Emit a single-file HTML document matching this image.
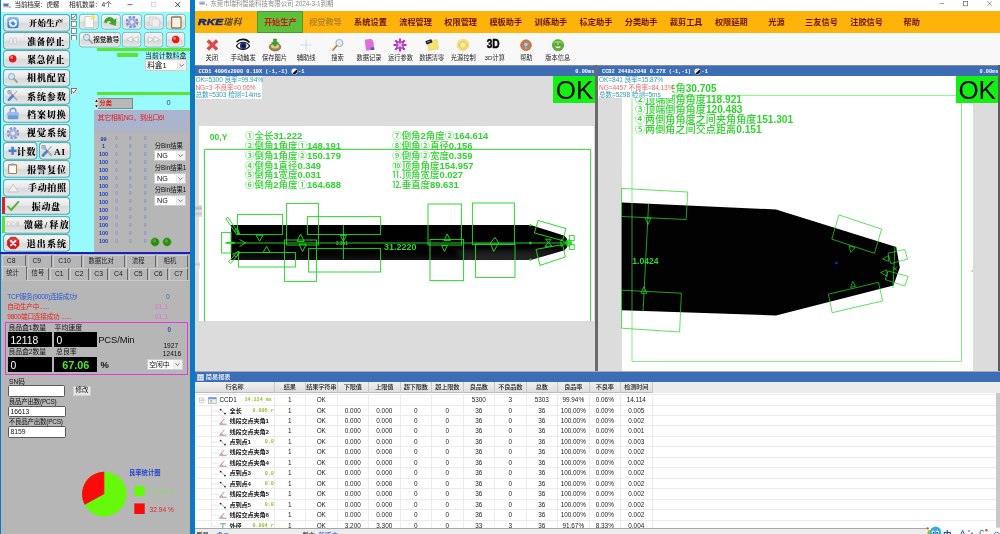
<!DOCTYPE html>
<html lang="zh"><head><meta charset="utf-8"><title>RKE</title>
<style>
html,body{margin:0;padding:0}
body{width:1000px;height:534px;position:relative;overflow:hidden;background:#0b78c2;font-family:"Liberation Sans","Noto Sans CJK SC",sans-serif;}
div,svg{position:absolute;box-sizing:border-box}
.t{white-space:nowrap;overflow:visible}
#root{left:0;top:0;width:1000px;height:534px;will-change:transform;overflow:hidden}
.sf{font-family:"Liberation Serif","Noto Serif CJK SC",serif;font-weight:900}
.btn{border:1px solid #9aa;border-radius:2px;background:linear-gradient(#f4f4f4,#e4e4e4 45%,#d6d6d6 55%,#e2e2e2);box-shadow:0 0 0 1px #5fb9bd}
.sbtn{border:1px solid #64b0b6;border-radius:2.5px;background:linear-gradient(#f6f6f6,#e8e8e8 45%,#dadada 55%,#e6e6e6);box-shadow:inset 0 0 0 0.5px #fff}
.sel{background:#fff;border:1px solid #ccc}
.inp{background:#fff;border:1.1px solid #5a5a5a;border-radius:1.6px}
</style></head><body><div id="root">

<div style="left:0px;top:0px;width:195px;height:534px;background:#0b78c2"></div>
<div style="left:1px;top:0px;width:189px;height:12px;background:#fff"></div>
<div style="left:1px;top:12px;width:189px;height:241px;background:#98fafa"></div>
<svg style="left:3px;top:2px" width="8" height="7" viewBox="0 0 8 7"><rect x="0.5" y="1" width="5" height="3.4" fill="#3a6fc0"/><rect x="0.5" y="1" width="5" height="1.2" fill="#9cc0f0"/><rect x="0" y="4.4" width="6" height="1" fill="#e0b060"/><circle cx="7" cy="5" r="0.7" fill="#555"/></svg>
<div class="t" style="left:14.5px;top:0.18px;height:9.24px;line-height:9.24px;font-size:6.6px;color:#222;letter-spacing:-0.2px">当前档案：虎螺</div>
<div class="t" style="left:69px;top:0.18px;height:9.24px;line-height:9.24px;font-size:6.6px;color:#222;letter-spacing:-0.1px">相机数量：4个</div>
<svg style="left:126px;top:0" width="60" height="10" viewBox="0 0 60 10"><path d="M1.5 4.6h5" stroke="#333" stroke-width="0.7"/><rect x="25.3" y="2.3" width="4.6" height="4.6" fill="none" stroke="#c4c4c4" stroke-width="0.6"/><path d="M49.3 2.2l4.8 4.8M54.1 2.2l-4.8 4.8" stroke="#222" stroke-width="0.9"/></svg>
<svg style="left:0;top:0" width="0" height="0"><defs><linearGradient id="bg1" x1="0" y1="0" x2="0" y2="1"><stop offset="0" stop-color="#f7f7f7"/><stop offset="0.45" stop-color="#e8e8e8"/><stop offset="0.55" stop-color="#d9d9d9"/><stop offset="1" stop-color="#e6e6e6"/></linearGradient></defs></svg>
<svg style="left:2.2px;top:12.6px" width="69.10" height="19.70" viewBox="2.2 12.6 69.10 19.70"><rect x="3.78" y="14.17" width="65.95" height="16.55" rx="3" fill="url(#bg1)" stroke="#5aaab2" stroke-width="1.15"/><rect x="4.65" y="15.05" width="64.20" height="14.80" rx="2.2" fill="none" stroke="#fff" stroke-width="0.5" opacity="0.8"/></svg>
<svg style="left:6.8px;top:16.50px" width="12.4" height="12.4" viewBox="0 0 12 12" overflow="visible"><rect x="0.4" y="0.6" width="10.8" height="10.4" rx="2.2" fill="#3f86d8"/><rect x="0.4" y="0.6" width="10.8" height="4.6" rx="2.2" fill="#86b8f0"/><path d="M2.6 6.6a3.2 3.2 0 0 1 6.2-1.4M9 5.4a3.2 3.2 0 0 1-6.2 1.4" stroke="#fff" stroke-width="1.5" fill="none"/><path d="M8 2.6l1.6 2.8-3 0.2zM3.6 9.6L2 6.8l3-0.2z" fill="#fff"/></svg>
<div class="t sf" style="left:16.174999999999997px;width:60px;text-align:center;top:17.67px;height:11.76px;line-height:11.76px;font-size:8.4px;color:#000;letter-spacing:0.35px">开始生产</div>
<svg style="left:2.2px;top:30.96px" width="69.10" height="19.70" viewBox="2.2 30.96 69.10 19.70"><rect x="3.78" y="32.54" width="65.95" height="16.55" rx="3" fill="url(#bg1)" stroke="#5aaab2" stroke-width="1.15"/><rect x="4.65" y="33.41" width="64.20" height="14.80" rx="2.2" fill="none" stroke="#fff" stroke-width="0.5" opacity="0.8"/></svg>
<svg style="left:6.8px;top:34.86px" width="12.4" height="12.4" viewBox="0 0 12 12" overflow="visible"><rect x="2.8" y="2.8" width="2.5" height="6" rx="1.1" fill="#f0f0f0" stroke="#bcbcbc" stroke-width="0.5"/><rect x="6.4" y="2.8" width="2.5" height="6" rx="1.1" fill="#f0f0f0" stroke="#bcbcbc" stroke-width="0.5"/></svg>
<div class="t sf" style="left:16.0px;width:60px;text-align:center;top:35.75px;height:12.32px;line-height:12.32px;font-size:8.8px;color:#000;letter-spacing:0.6px">准备停止</div>
<svg style="left:2.2px;top:49.32px" width="69.10" height="19.70" viewBox="2.2 49.32 69.10 19.70"><rect x="3.78" y="50.90" width="65.95" height="16.55" rx="3" fill="url(#bg1)" stroke="#5aaab2" stroke-width="1.15"/><rect x="4.65" y="51.77" width="64.20" height="14.80" rx="2.2" fill="none" stroke="#fff" stroke-width="0.5" opacity="0.8"/></svg>
<svg style="left:6.8px;top:53.22px" width="12.4" height="12.4" viewBox="0 0 12 12" overflow="visible"><circle cx="5.5" cy="5.5" r="3.6" fill="#e41818"/><circle cx="4.5" cy="4.3" r="1.3" fill="#ff8a8a"/></svg>
<div class="t sf" style="left:16.0px;width:60px;text-align:center;top:54.11px;height:12.32px;line-height:12.32px;font-size:8.8px;color:#000;letter-spacing:0.6px">紧急停止</div>
<svg style="left:2.2px;top:67.67999999999999px" width="69.10" height="19.70" viewBox="2.2 67.67999999999999 69.10 19.70"><rect x="3.78" y="69.25" width="65.95" height="16.55" rx="3" fill="url(#bg1)" stroke="#5aaab2" stroke-width="1.15"/><rect x="4.65" y="70.13" width="64.20" height="14.80" rx="2.2" fill="none" stroke="#fff" stroke-width="0.5" opacity="0.8"/></svg>
<svg style="left:6.8px;top:71.58px" width="12.4" height="12.4" viewBox="0 0 12 12" overflow="visible"><circle cx="4.4" cy="4.4" r="3" fill="#cfe4fb" stroke="#8aa" stroke-width="0.9"/><path d="M6.6 6.6l3.2 3.2" stroke="#999" stroke-width="1.6" stroke-linecap="round"/></svg>
<div class="t sf" style="left:16.85px;width:60px;text-align:center;top:72.33px;height:12.60px;line-height:12.60px;font-size:9px;color:#000;letter-spacing:0.9px">相机配置</div>
<svg style="left:2.2px;top:86.03999999999999px" width="69.10" height="19.70" viewBox="2.2 86.03999999999999 69.10 19.70"><rect x="3.78" y="87.61" width="65.95" height="16.55" rx="3" fill="url(#bg1)" stroke="#5aaab2" stroke-width="1.15"/><rect x="4.65" y="88.49" width="64.20" height="14.80" rx="2.2" fill="none" stroke="#fff" stroke-width="0.5" opacity="0.8"/></svg>
<svg style="left:6.8px;top:89.94px" width="12.4" height="12.4" viewBox="0 0 12 12" overflow="visible"><path d="M2.2 1.8l7.2 7.6" stroke="#a8acb4" stroke-width="1.7" stroke-linecap="round"/><circle cx="2.4" cy="2" r="1.7" fill="none" stroke="#a8acb4" stroke-width="1.1"/><path d="M9.4 1.4L5.6 5.6" stroke="#b0b4bc" stroke-width="1.1" stroke-linecap="round"/><path d="M5.4 5.8L1.8 9.6" stroke="#4a84d4" stroke-width="2.5" stroke-linecap="round"/></svg>
<div class="t sf" style="left:16.85px;width:60px;text-align:center;top:90.69px;height:12.60px;line-height:12.60px;font-size:9px;color:#000;letter-spacing:0.9px">系统参数</div>
<svg style="left:2.2px;top:104.39999999999999px" width="69.10" height="19.70" viewBox="2.2 104.39999999999999 69.10 19.70"><rect x="3.78" y="105.97" width="65.95" height="16.55" rx="3" fill="url(#bg1)" stroke="#5aaab2" stroke-width="1.15"/><rect x="4.65" y="106.85" width="64.20" height="14.80" rx="2.2" fill="none" stroke="#fff" stroke-width="0.5" opacity="0.8"/></svg>
<svg style="left:6.8px;top:108.30px" width="12.4" height="12.4" viewBox="0 0 12 12" overflow="visible"><rect x="0.6" y="4.4" width="10.4" height="6.6" rx="0.8" fill="#6a9ade"/><path d="M3 4.4V3a2.8 2.8 0 0 1 5.6 0v1.4" stroke="#6a94d4" stroke-width="1.3" fill="none"/><rect x="0.6" y="4.4" width="10.4" height="2.8" fill="#98bcee"/></svg>
<div class="t sf" style="left:16.85px;width:60px;text-align:center;top:109.05px;height:12.60px;line-height:12.60px;font-size:9px;color:#000;letter-spacing:0.9px">档案切换</div>
<svg style="left:2.2px;top:122.75999999999999px" width="69.10" height="19.70" viewBox="2.2 122.75999999999999 69.10 19.70"><rect x="3.78" y="124.33" width="65.95" height="16.55" rx="3" fill="url(#bg1)" stroke="#5aaab2" stroke-width="1.15"/><rect x="4.65" y="125.21" width="64.20" height="14.80" rx="2.2" fill="none" stroke="#fff" stroke-width="0.5" opacity="0.8"/></svg>
<svg style="left:6.8px;top:126.66px" width="12.4" height="12.4" viewBox="0 0 12 12" overflow="visible"><circle cx="5.8" cy="6" r="4.7" fill="none" stroke="#8a98d4" stroke-width="2.6" stroke-dasharray="2.3 1.39"/><circle cx="5.8" cy="6" r="3.9" fill="#a8b2e4"/><circle cx="5.8" cy="6" r="1.7" fill="#f0f2ff"/></svg>
<div class="t sf" style="left:17.049999999999997px;width:60px;text-align:center;top:127.41px;height:12.60px;line-height:12.60px;font-size:9px;color:#000;letter-spacing:1.1px">视觉系统</div>
<svg style="left:2.2px;top:141.11999999999998px" width="36.40" height="19.70" viewBox="2.2 141.11999999999998 36.40 19.70"><rect x="3.78" y="142.69" width="33.25" height="16.55" rx="3" fill="url(#bg1)" stroke="#5aaab2" stroke-width="1.15"/><rect x="4.65" y="143.57" width="31.50" height="14.80" rx="2.2" fill="none" stroke="#fff" stroke-width="0.5" opacity="0.8"/></svg>
<svg style="left:37.7px;top:141.11999999999998px" width="33.70" height="19.70" viewBox="37.7 141.11999999999998 33.70 19.70"><rect x="39.28" y="142.69" width="30.55" height="16.55" rx="3" fill="url(#bg1)" stroke="#5aaab2" stroke-width="1.15"/><rect x="40.15" y="143.57" width="28.80" height="14.80" rx="2.2" fill="none" stroke="#fff" stroke-width="0.5" opacity="0.8"/></svg>
<svg style="left:7.8px;top:145.72px" width="10" height="10" viewBox="0 0 10 10"><path d="M4.6 0.8v8M0.6 4.8h8" stroke="#4a80d4" stroke-width="2.6"/></svg>
<div class="t sf" style="left:16.8px;top:145.77px;height:12.60px;line-height:12.60px;font-size:9px;color:#000;letter-spacing:0.6px">计数</div>
<svg style="left:41.2px;top:145.12px" width="12" height="12" viewBox="0 0 11 11"><path d="M2.2 1.8l7.2 7.6" stroke="#a8acb4" stroke-width="1.7" stroke-linecap="round"/><circle cx="2.4" cy="2" r="1.7" fill="none" stroke="#a8acb4" stroke-width="1.1"/><path d="M9.4 1.4L5.6 5.6" stroke="#b0b4bc" stroke-width="1.1" stroke-linecap="round"/><path d="M5.4 5.8L1.8 9.6" stroke="#4a84d4" stroke-width="2.5" stroke-linecap="round"/></svg>
<div class="t sf" style="left:54px;top:145.77px;height:12.60px;line-height:12.60px;font-size:9px;color:#000;letter-spacing:1px">AI</div>
<svg style="left:2.2px;top:159.48px" width="69.10" height="19.70" viewBox="2.2 159.48 69.10 19.70"><rect x="3.78" y="161.05" width="65.95" height="16.55" rx="3" fill="url(#bg1)" stroke="#5aaab2" stroke-width="1.15"/><rect x="4.65" y="161.93" width="64.20" height="14.80" rx="2.2" fill="none" stroke="#fff" stroke-width="0.5" opacity="0.8"/></svg>
<svg style="left:6.8px;top:163.38px" width="12.4" height="12.4" viewBox="0 0 12 12" overflow="visible"><rect x="1.6" y="1.6" width="7.6" height="8.6" rx="0.8" fill="#fff" stroke="#b08040" stroke-width="1.1"/><rect x="3.6" y="0.6" width="3.6" height="1.8" fill="#999"/></svg>
<div class="t sf" style="left:17.075000000000003px;width:60px;text-align:center;top:164.13px;height:12.60px;line-height:12.60px;font-size:9px;color:#000;letter-spacing:0.95px">报警复位</div>
<svg style="left:2.2px;top:177.84px" width="69.10" height="19.70" viewBox="2.2 177.84 69.10 19.70"><rect x="3.78" y="179.41" width="65.95" height="16.55" rx="3" fill="url(#bg1)" stroke="#5aaab2" stroke-width="1.15"/><rect x="4.65" y="180.29" width="64.20" height="14.80" rx="2.2" fill="none" stroke="#fff" stroke-width="0.5" opacity="0.8"/></svg>
<svg style="left:6.8px;top:181.74px" width="12.4" height="12.4" viewBox="0 0 12 12" overflow="visible"><path d="M6 2L10.8 9.6H1.2z" fill="#f0f0f0" stroke="#b4b4b4" stroke-width="0.6"/></svg>
<div class="t sf" style="left:17.35px;width:60px;text-align:center;top:182.49px;height:12.60px;line-height:12.60px;font-size:9px;color:#000;letter-spacing:0.7px">手动拍照</div>
<svg style="left:2.2px;top:196.2px" width="69.10" height="19.70" viewBox="2.2 196.2 69.10 19.70"><rect x="3.78" y="197.77" width="65.95" height="16.55" rx="3" fill="url(#bg1)" stroke="#5aaab2" stroke-width="1.15"/><rect x="4.65" y="198.65" width="64.20" height="14.80" rx="2.2" fill="none" stroke="#fff" stroke-width="0.5" opacity="0.8"/></svg>
<div style="left:2.2px;top:197.39999999999998px;width:2.6px;height:17.099999999999998px;background:#e02020"></div>
<svg style="left:6.8px;top:200.10px" width="12.4" height="12.4" viewBox="0 0 12 12" overflow="visible"><path d="M1 6.4l3.2 3.2L11 1.8" stroke="#5ab444" stroke-width="2" fill="none" stroke-linecap="round"/></svg>
<div class="t sf" style="left:16.199999999999996px;width:60px;text-align:center;top:200.85px;height:12.60px;line-height:12.60px;font-size:9px;color:#000;letter-spacing:0.6px">振动盘</div>
<svg style="left:2.2px;top:214.55999999999997px" width="69.10" height="19.70" viewBox="2.2 214.55999999999997 69.10 19.70"><rect x="3.78" y="216.13" width="65.95" height="16.55" rx="3" fill="url(#bg1)" stroke="#5aaab2" stroke-width="1.15"/><rect x="4.65" y="217.01" width="64.20" height="14.80" rx="2.2" fill="none" stroke="#fff" stroke-width="0.5" opacity="0.8"/></svg>
<div style="left:2.2px;top:215.75999999999996px;width:2.6px;height:17.099999999999998px;background:#60e030"></div>
<svg style="left:6.8px;top:218.46px" width="12.4" height="12.4" viewBox="0 0 12 12" overflow="visible"><path d="M0.6 3.2v5l3.6-2.5zM4.8 3.2v5l3.6-2.5z" fill="#f2f2f2" stroke="#b8b8b8" stroke-width="0.5"/><path d="M9.6 3.2v5M11 3.2v5" stroke="#b8b8b8" stroke-width="0.6"/></svg>
<div class="t sf" style="left:16.849999999999994px;width:60px;text-align:center;top:219.21px;height:12.60px;line-height:12.60px;font-size:9px;color:#000;letter-spacing:1.1px">激磁<span style="margin:0 1.2px 0 0.6px">/</span>释放</div>
<svg style="left:2.2px;top:232.92px" width="69.10" height="19.70" viewBox="2.2 232.92 69.10 19.70"><rect x="3.78" y="234.49" width="65.95" height="16.55" rx="3" fill="url(#bg1)" stroke="#5aaab2" stroke-width="1.15"/><rect x="4.65" y="235.37" width="64.20" height="14.80" rx="2.2" fill="none" stroke="#fff" stroke-width="0.5" opacity="0.8"/></svg>
<svg style="left:6.8px;top:236.82px" width="12.4" height="12.4" viewBox="0 0 12 12" overflow="visible"><path d="M3.4 -0.4h4.8l3.2 3.2v4.8l-3.2 3.2H3.4l-3.2-3.2V2.8z" fill="#d41a1a" stroke="#a81010" stroke-width="0.5" transform="translate(0.2 0.6)"/><ellipse cx="6" cy="3.6" rx="4.4" ry="2.6" fill="#f07070" opacity="0.45"/><path d="M3.8 3.8l4.4 4.4M8.2 3.8l-4.4 4.4" stroke="#fff" stroke-width="1.7" stroke-linecap="round"/></svg>
<div class="t sf" style="left:16.949999999999996px;width:60px;text-align:center;top:237.57px;height:12.60px;line-height:12.60px;font-size:9px;color:#000;letter-spacing:1.1px">退出系统</div>
<svg style="left:71.2px;top:14.2px" width="5.6" height="5.6" viewBox="0 0 6 6"><rect x="0.35" y="0.35" width="5.3" height="5.3" fill="#fff" stroke="#555" stroke-width="0.7"/><path d="M1.3 3.1l1.2 1.3L4.8 1.5" stroke="#222" stroke-width="0.75" fill="none"/></svg>
<svg style="left:71.2px;top:21.1px" width="5.6" height="5.6" viewBox="0 0 6 6"><rect x="0.35" y="0.35" width="5.3" height="5.3" fill="#fff" stroke="#555" stroke-width="0.7"/></svg>
<svg style="left:71.2px;top:28.0px" width="5.6" height="5.6" viewBox="0 0 6 6"><rect x="0.35" y="0.35" width="5.3" height="5.3" fill="#fff" stroke="#555" stroke-width="0.7"/></svg>
<svg style="left:71.2px;top:34.900000000000006px" width="5.6" height="5.6" viewBox="0 0 6 6"><rect x="0.35" y="0.35" width="5.3" height="5.3" fill="#fff" stroke="#555" stroke-width="0.7"/></svg>
<svg style="left:70.6px;top:87.6px" width="6.6" height="6.6" viewBox="0 0 6 6"><rect x="0.35" y="0.35" width="5.3" height="5.3" fill="#fff" stroke="#555" stroke-width="0.7"/><path d="M1.3 3.1l1.2 1.3L4.8 1.5" stroke="#222" stroke-width="0.75" fill="none"/></svg>
<svg style="left:77.85px;top:13.4px" width="21.60" height="17.50" viewBox="77.85 13.4 21.60 17.50"><rect x="79.30" y="14.85" width="18.70" height="14.60" rx="2.6" fill="url(#bg1)" stroke="#62aeb6" stroke-width="0.9"/><rect x="80.05" y="15.60" width="17.20" height="13.10" rx="1.8" fill="none" stroke="#fff" stroke-width="0.5" opacity="0.8"/></svg>
<svg style="left:80.65px;top:14.2px" width="16" height="16" viewBox="0 0 16 16"><path d="M4 2.5h8.5v11H4z" fill="#fafafa" stroke="#bbb" stroke-width="0.6"/><path d="M9.5 2.5l3 3h-3z" fill="#ddd"/><circle cx="12.2" cy="3" r="2" fill="#f8e83a"/></svg>
<svg style="left:99.5px;top:13.4px" width="21.70" height="17.50" viewBox="99.5 13.4 21.70 17.50"><rect x="100.95" y="14.85" width="18.80" height="14.60" rx="2.6" fill="url(#bg1)" stroke="#62aeb6" stroke-width="0.9"/><rect x="101.70" y="15.60" width="17.30" height="13.10" rx="1.8" fill="none" stroke="#fff" stroke-width="0.5" opacity="0.8"/></svg>
<svg style="left:102.35px;top:14.2px" width="16" height="16" viewBox="0 0 16 16"><path d="M2.4 8.4c0.4-5.6 7.4-6.8 9.8-2.4l2-1.2-0.6 6.8-6.2-2 2.1-1.3c-1.6-2.6-4.6-1.8-4.9 0.6z" fill="#3aa828" stroke="#2a8a1c" stroke-width="0.4"/></svg>
<svg style="left:121.2px;top:13.4px" width="21.70" height="17.50" viewBox="121.2 13.4 21.70 17.50"><rect x="122.65" y="14.85" width="18.80" height="14.60" rx="2.6" fill="url(#bg1)" stroke="#62aeb6" stroke-width="0.9"/><rect x="123.40" y="15.60" width="17.30" height="13.10" rx="1.8" fill="none" stroke="#fff" stroke-width="0.5" opacity="0.8"/></svg>
<svg style="left:124.05px;top:14.2px" width="16" height="16" viewBox="0 0 16 16"><circle cx="8" cy="8" r="4.9" fill="none" stroke="#7f8fd0" stroke-width="2.8" stroke-dasharray="2.4 1.45"/><circle cx="8" cy="8" r="4" fill="#a4aee4"/><circle cx="8" cy="8" r="1.7" fill="#f4f4ff"/></svg>
<svg style="left:143.1px;top:13.4px" width="21.70" height="17.50" viewBox="143.1 13.4 21.70 17.50"><rect x="144.55" y="14.85" width="18.80" height="14.60" rx="2.6" fill="url(#bg1)" stroke="#62aeb6" stroke-width="0.9"/><rect x="145.30" y="15.60" width="17.30" height="13.10" rx="1.8" fill="none" stroke="#fff" stroke-width="0.5" opacity="0.8"/></svg>
<svg style="left:145.95px;top:14.2px" width="16" height="16" viewBox="0 0 16 16"><rect x="3.5" y="3" width="7.5" height="8" fill="#eee" stroke="#c4c4c4" stroke-width="0.6"/><rect x="6" y="5" width="7.5" height="8" fill="#eee" stroke="#c4c4c4" stroke-width="0.6"/></svg>
<svg style="left:164.7px;top:13.4px" width="21.80" height="17.50" viewBox="164.7 13.4 21.80 17.50"><rect x="166.15" y="14.85" width="18.90" height="14.60" rx="2.6" fill="url(#bg1)" stroke="#62aeb6" stroke-width="0.9"/><rect x="166.90" y="15.60" width="17.40" height="13.10" rx="1.8" fill="none" stroke="#fff" stroke-width="0.5" opacity="0.8"/></svg>
<svg style="left:167.60px;top:14.2px" width="16" height="16" viewBox="0 0 16 16"><rect x="3.6" y="3" width="9.4" height="11" rx="0.8" fill="#f6f2ea" stroke="#a87838" stroke-width="1.3"/><rect x="6" y="1.8" width="4.6" height="2.2" fill="#999"/></svg>
<svg style="left:77.5px;top:30.5px" width="43.70" height="17.40" viewBox="77.5 30.5 43.70 17.40"><rect x="78.95" y="31.95" width="40.80" height="14.50" rx="2.6" fill="url(#bg1)" stroke="#62aeb6" stroke-width="0.9"/><rect x="79.70" y="32.70" width="39.30" height="13.00" rx="1.8" fill="none" stroke="#fff" stroke-width="0.5" opacity="0.8"/></svg>
<svg style="left:81.6px;top:33.2px" width="12" height="12" viewBox="0 0 12 12"><circle cx="4.6" cy="4.4" r="3.1" fill="#d4e8fc" stroke="#8aa0b8" stroke-width="0.9"/><path d="M7 6.8l3.4 3.4" stroke="#999" stroke-width="1.6" stroke-linecap="round"/></svg>
<div class="t" style="left:93.2px;top:35.05px;height:9.10px;line-height:9.10px;font-size:6.5px;color:#000;font-weight:500">视觉教导</div>
<svg style="left:121.4px;top:30.5px" width="21.20" height="17.40" viewBox="121.4 30.5 21.20 17.40"><rect x="122.85" y="31.95" width="18.30" height="14.50" rx="2.6" fill="url(#bg1)" stroke="#62aeb6" stroke-width="0.9"/><rect x="123.60" y="32.70" width="16.80" height="13.00" rx="1.8" fill="none" stroke="#fff" stroke-width="0.5" opacity="0.8"/></svg>
<svg style="left:143.4px;top:30.5px" width="21.20" height="17.40" viewBox="143.4 30.5 21.20 17.40"><rect x="144.85" y="31.95" width="18.30" height="14.50" rx="2.6" fill="url(#bg1)" stroke="#62aeb6" stroke-width="0.9"/><rect x="145.60" y="32.70" width="16.80" height="13.00" rx="1.8" fill="none" stroke="#fff" stroke-width="0.5" opacity="0.8"/></svg>
<svg style="left:165.1px;top:30.5px" width="21.10" height="17.40" viewBox="165.1 30.5 21.10 17.40"><rect x="166.55" y="31.95" width="18.20" height="14.50" rx="2.6" fill="url(#bg1)" stroke="#62aeb6" stroke-width="0.9"/><rect x="167.30" y="32.70" width="16.70" height="13.00" rx="1.8" fill="none" stroke="#fff" stroke-width="0.5" opacity="0.8"/></svg>
<svg style="left:122.7px;top:32px" width="19" height="15" viewBox="0 0 19 15"><path d="M9.2 4.6v5.8L3.8 7.5zM15 4.6v5.8L9.6 7.5z" fill="#f6f6f6" stroke="#b4b4b4" stroke-width="0.6"/></svg>
<svg style="left:144.3px;top:32px" width="19" height="15" viewBox="0 0 19 15"><path d="M4.2 4.6v5.8l5.4-2.9zM10 4.6v5.8l5.4-2.9z" fill="#f6f6f6" stroke="#b4b4b4" stroke-width="0.6"/></svg>
<svg style="left:166.0px;top:32px" width="19" height="15" viewBox="0 0 19 15"><circle cx="9.7" cy="7.5" r="3.7" fill="#e41818"/><circle cx="8.7" cy="6.4" r="1.3" fill="#ff8080"/></svg>
<div style="left:97px;top:48px;width:93px;height:3.3px;background:#58e62e"></div>
<div style="left:117px;top:53.4px;width:20.8px;height:3.4px;background:#58e62e"></div>
<div style="left:96.5px;top:92px;width:93.5px;height:3.2px;background:#58e62e"></div>
<div class="t" style="left:145px;top:50.77px;height:9.66px;line-height:9.66px;font-size:6.9px;color:#222;">当前计数料盒</div>
<div class="sel" style="left:144.7px;top:59.4px;width:42.6px;height:12px;border-width:0.8px"><div class="t" style="left:1.6px;top:0.6px;height:9.4px;line-height:9.4px;font-size:7.6px;color:#111">料盒1</div><svg style="right:0;top:0" width="9.6" height="10.4" viewBox="0 0 9.6 10.4"><rect width="9.6" height="10.4" fill="#f1f1f1"/><path d="M0.2 0v10.4" stroke="#d4d4d4" stroke-width="0.4"/><path d="M2.6999999999999997 4.2l2.1 2.1l2.1-2.1" stroke="#444" stroke-width="0.7" fill="none"/></svg></div>
<div style="left:94.5px;top:97.7px;width:38.3px;height:11.2px;background:#b8b8b8;border:0.8px solid #888"></div>
<svg style="left:94.5px;top:97.7px" width="3" height="11.2" viewBox="0 0 3 11.2"><rect width="3" height="11.2" fill="#ddd"/><path d="M0.3 4l1.2-2.4L2.7 4zM0.3 7.2l1.2 2.4 1.2-2.4z" fill="#111"/></svg>
<div class="t" style="left:99.6px;top:99.13px;height:8.54px;line-height:8.54px;font-size:6.1px;color:#e81818;font-weight:700">分类</div>
<div class="t" style="left:163.6px;width:10px;text-align:center;top:98.02px;height:10.36px;line-height:10.36px;font-size:7.4px;color:#145a5a;">0</div>
<div style="left:94px;top:110px;width:96px;height:24px;background:linear-gradient(#a9b5cf,#aab4cc 70%,#b2b4bc)"></div>
<div style="left:94px;top:133px;width:96px;height:119.5px;background:#b6b6b6"></div>
<div style="left:188.8px;top:110px;width:1.2px;height:142px;background:#e6a0a4"></div>
<div class="t" style="left:97.8px;top:112.57px;height:9.66px;line-height:9.66px;font-size:6.9px;color:#e81818;letter-spacing:-0.42px">其它相机NG，到出口6!</div>
<div class="t" style="left:93.6px;width:20px;text-align:center;top:135.55px;height:7.70px;line-height:7.70px;font-size:5.5px;color:#2040c0;font-weight:700">99</div>
<div class="t" style="left:111.6px;width:10px;text-align:center;top:136.11px;height:6.58px;line-height:6.58px;font-size:4.7px;color:#8690cc;font-weight:700">0</div>
<div class="t" style="left:125.30000000000001px;width:10px;text-align:center;top:136.11px;height:6.58px;line-height:6.58px;font-size:4.7px;color:#8690cc;font-weight:700">0</div>
<div class="t" style="left:140.4px;width:10px;text-align:center;top:136.11px;height:6.58px;line-height:6.58px;font-size:4.7px;color:#8690cc;font-weight:700">0</div>
<div class="t" style="left:93.6px;width:20px;text-align:center;top:143.45px;height:7.70px;line-height:7.70px;font-size:5.5px;color:#2040c0;font-weight:700">1</div>
<div class="t" style="left:111.6px;width:10px;text-align:center;top:144.01px;height:6.58px;line-height:6.58px;font-size:4.7px;color:#8690cc;font-weight:700">0</div>
<div class="t" style="left:125.30000000000001px;width:10px;text-align:center;top:144.01px;height:6.58px;line-height:6.58px;font-size:4.7px;color:#8690cc;font-weight:700">0</div>
<div class="t" style="left:140.4px;width:10px;text-align:center;top:144.01px;height:6.58px;line-height:6.58px;font-size:4.7px;color:#8690cc;font-weight:700">0</div>
<div class="t" style="left:93.6px;width:20px;text-align:center;top:151.35px;height:7.70px;line-height:7.70px;font-size:5.5px;color:#2040c0;font-weight:700">100</div>
<div class="t" style="left:111.6px;width:10px;text-align:center;top:151.91px;height:6.58px;line-height:6.58px;font-size:4.7px;color:#8690cc;font-weight:700">0</div>
<div class="t" style="left:125.30000000000001px;width:10px;text-align:center;top:151.91px;height:6.58px;line-height:6.58px;font-size:4.7px;color:#8690cc;font-weight:700">0</div>
<div class="t" style="left:140.4px;width:10px;text-align:center;top:151.91px;height:6.58px;line-height:6.58px;font-size:4.7px;color:#8690cc;font-weight:700">0</div>
<div class="t" style="left:93.6px;width:20px;text-align:center;top:159.25px;height:7.70px;line-height:7.70px;font-size:5.5px;color:#2040c0;font-weight:700">100</div>
<div class="t" style="left:111.6px;width:10px;text-align:center;top:159.81px;height:6.58px;line-height:6.58px;font-size:4.7px;color:#8690cc;font-weight:700">0</div>
<div class="t" style="left:125.30000000000001px;width:10px;text-align:center;top:159.81px;height:6.58px;line-height:6.58px;font-size:4.7px;color:#8690cc;font-weight:700">0</div>
<div class="t" style="left:140.4px;width:10px;text-align:center;top:159.81px;height:6.58px;line-height:6.58px;font-size:4.7px;color:#8690cc;font-weight:700">0</div>
<div class="t" style="left:93.6px;width:20px;text-align:center;top:167.15px;height:7.70px;line-height:7.70px;font-size:5.5px;color:#2040c0;font-weight:700">100</div>
<div class="t" style="left:111.6px;width:10px;text-align:center;top:167.71px;height:6.58px;line-height:6.58px;font-size:4.7px;color:#8690cc;font-weight:700">0</div>
<div class="t" style="left:125.30000000000001px;width:10px;text-align:center;top:167.71px;height:6.58px;line-height:6.58px;font-size:4.7px;color:#8690cc;font-weight:700">0</div>
<div class="t" style="left:140.4px;width:10px;text-align:center;top:167.71px;height:6.58px;line-height:6.58px;font-size:4.7px;color:#8690cc;font-weight:700">0</div>
<div class="t" style="left:93.6px;width:20px;text-align:center;top:175.05px;height:7.70px;line-height:7.70px;font-size:5.5px;color:#2040c0;font-weight:700">100</div>
<div class="t" style="left:111.6px;width:10px;text-align:center;top:175.61px;height:6.58px;line-height:6.58px;font-size:4.7px;color:#8690cc;font-weight:700">0</div>
<div class="t" style="left:125.30000000000001px;width:10px;text-align:center;top:175.61px;height:6.58px;line-height:6.58px;font-size:4.7px;color:#8690cc;font-weight:700">0</div>
<div class="t" style="left:140.4px;width:10px;text-align:center;top:175.61px;height:6.58px;line-height:6.58px;font-size:4.7px;color:#8690cc;font-weight:700">0</div>
<div class="t" style="left:93.6px;width:20px;text-align:center;top:182.95px;height:7.70px;line-height:7.70px;font-size:5.5px;color:#2040c0;font-weight:700">100</div>
<div class="t" style="left:111.6px;width:10px;text-align:center;top:183.51px;height:6.58px;line-height:6.58px;font-size:4.7px;color:#8690cc;font-weight:700">0</div>
<div class="t" style="left:125.30000000000001px;width:10px;text-align:center;top:183.51px;height:6.58px;line-height:6.58px;font-size:4.7px;color:#8690cc;font-weight:700">0</div>
<div class="t" style="left:140.4px;width:10px;text-align:center;top:183.51px;height:6.58px;line-height:6.58px;font-size:4.7px;color:#8690cc;font-weight:700">0</div>
<div class="t" style="left:93.6px;width:20px;text-align:center;top:190.85px;height:7.70px;line-height:7.70px;font-size:5.5px;color:#2040c0;font-weight:700">100</div>
<div class="t" style="left:111.6px;width:10px;text-align:center;top:191.41px;height:6.58px;line-height:6.58px;font-size:4.7px;color:#8690cc;font-weight:700">0</div>
<div class="t" style="left:125.30000000000001px;width:10px;text-align:center;top:191.41px;height:6.58px;line-height:6.58px;font-size:4.7px;color:#8690cc;font-weight:700">0</div>
<div class="t" style="left:140.4px;width:10px;text-align:center;top:191.41px;height:6.58px;line-height:6.58px;font-size:4.7px;color:#8690cc;font-weight:700">0</div>
<div class="t" style="left:93.6px;width:20px;text-align:center;top:198.75px;height:7.70px;line-height:7.70px;font-size:5.5px;color:#2040c0;font-weight:700">100</div>
<div class="t" style="left:111.6px;width:10px;text-align:center;top:199.31px;height:6.58px;line-height:6.58px;font-size:4.7px;color:#8690cc;font-weight:700">0</div>
<div class="t" style="left:125.30000000000001px;width:10px;text-align:center;top:199.31px;height:6.58px;line-height:6.58px;font-size:4.7px;color:#8690cc;font-weight:700">0</div>
<div class="t" style="left:140.4px;width:10px;text-align:center;top:199.31px;height:6.58px;line-height:6.58px;font-size:4.7px;color:#8690cc;font-weight:700">0</div>
<div class="t" style="left:93.6px;width:20px;text-align:center;top:206.65px;height:7.70px;line-height:7.70px;font-size:5.5px;color:#2040c0;font-weight:700">100</div>
<div class="t" style="left:111.6px;width:10px;text-align:center;top:207.21px;height:6.58px;line-height:6.58px;font-size:4.7px;color:#8690cc;font-weight:700">0</div>
<div class="t" style="left:125.30000000000001px;width:10px;text-align:center;top:207.21px;height:6.58px;line-height:6.58px;font-size:4.7px;color:#8690cc;font-weight:700">0</div>
<div class="t" style="left:140.4px;width:10px;text-align:center;top:207.21px;height:6.58px;line-height:6.58px;font-size:4.7px;color:#8690cc;font-weight:700">0</div>
<div class="t" style="left:93.6px;width:20px;text-align:center;top:214.55px;height:7.70px;line-height:7.70px;font-size:5.5px;color:#2040c0;font-weight:700">100</div>
<div class="t" style="left:111.6px;width:10px;text-align:center;top:215.11px;height:6.58px;line-height:6.58px;font-size:4.7px;color:#8690cc;font-weight:700">0</div>
<div class="t" style="left:125.30000000000001px;width:10px;text-align:center;top:215.11px;height:6.58px;line-height:6.58px;font-size:4.7px;color:#8690cc;font-weight:700">0</div>
<div class="t" style="left:140.4px;width:10px;text-align:center;top:215.11px;height:6.58px;line-height:6.58px;font-size:4.7px;color:#8690cc;font-weight:700">0</div>
<div class="t" style="left:93.6px;width:20px;text-align:center;top:222.45px;height:7.70px;line-height:7.70px;font-size:5.5px;color:#2040c0;font-weight:700">100</div>
<div class="t" style="left:111.6px;width:10px;text-align:center;top:223.01px;height:6.58px;line-height:6.58px;font-size:4.7px;color:#8690cc;font-weight:700">0</div>
<div class="t" style="left:125.30000000000001px;width:10px;text-align:center;top:223.01px;height:6.58px;line-height:6.58px;font-size:4.7px;color:#8690cc;font-weight:700">0</div>
<div class="t" style="left:140.4px;width:10px;text-align:center;top:223.01px;height:6.58px;line-height:6.58px;font-size:4.7px;color:#8690cc;font-weight:700">0</div>
<div class="t" style="left:93.6px;width:20px;text-align:center;top:230.35px;height:7.70px;line-height:7.70px;font-size:5.5px;color:#2040c0;font-weight:700">100</div>
<div class="t" style="left:111.6px;width:10px;text-align:center;top:230.91px;height:6.58px;line-height:6.58px;font-size:4.7px;color:#8690cc;font-weight:700">0</div>
<div class="t" style="left:125.30000000000001px;width:10px;text-align:center;top:230.91px;height:6.58px;line-height:6.58px;font-size:4.7px;color:#8690cc;font-weight:700">0</div>
<div class="t" style="left:140.4px;width:10px;text-align:center;top:230.91px;height:6.58px;line-height:6.58px;font-size:4.7px;color:#8690cc;font-weight:700">0</div>
<div class="t" style="left:93.6px;width:20px;text-align:center;top:238.25px;height:7.70px;line-height:7.70px;font-size:5.5px;color:#2040c0;font-weight:700">100</div>
<div class="t" style="left:111.6px;width:10px;text-align:center;top:238.81px;height:6.58px;line-height:6.58px;font-size:4.7px;color:#8690cc;font-weight:700">0</div>
<div class="t" style="left:125.30000000000001px;width:10px;text-align:center;top:238.81px;height:6.58px;line-height:6.58px;font-size:4.7px;color:#8690cc;font-weight:700">0</div>
<div class="t" style="left:140.4px;width:10px;text-align:center;top:238.81px;height:6.58px;line-height:6.58px;font-size:4.7px;color:#8690cc;font-weight:700">0</div>
<div class="t" style="left:154.8px;top:141.79px;height:8.82px;line-height:8.82px;font-size:6.3px;color:#111;">分Bin结果</div>
<div class="sel" style="left:154.4px;top:150px;width:31.6px;height:10.6px;border-width:0.8px"><div class="t" style="left:1.6px;top:0.6px;height:8.0px;line-height:8.0px;font-size:7.2px;color:#111">NG</div><svg style="right:0;top:0" width="9" height="9.0" viewBox="0 0 9 9.0"><rect width="9" height="9.0" fill="#f1f1f1"/><path d="M0.2 0v9.0" stroke="#d4d4d4" stroke-width="0.4"/><path d="M2.4 3.5l2.1 2.1l2.1-2.1" stroke="#444" stroke-width="0.7" fill="none"/></svg></div>
<div class="t" style="left:154.8px;top:163.79px;height:8.82px;line-height:8.82px;font-size:6.3px;color:#111;">分Bin结果1</div>
<div class="sel" style="left:154.4px;top:173.2px;width:31.6px;height:10.6px;border-width:0.8px"><div class="t" style="left:1.6px;top:0.6px;height:8.0px;line-height:8.0px;font-size:7.2px;color:#111">NG</div><svg style="right:0;top:0" width="9" height="9.0" viewBox="0 0 9 9.0"><rect width="9" height="9.0" fill="#f1f1f1"/><path d="M0.2 0v9.0" stroke="#d4d4d4" stroke-width="0.4"/><path d="M2.4 3.5l2.1 2.1l2.1-2.1" stroke="#444" stroke-width="0.7" fill="none"/></svg></div>
<div class="t" style="left:154.8px;top:185.99px;height:8.82px;line-height:8.82px;font-size:6.3px;color:#111;">分Bin结果1</div>
<div class="sel" style="left:154.4px;top:195.2px;width:31.6px;height:10.8px;border-width:0.8px"><div class="t" style="left:1.6px;top:0.6px;height:8.200000000000001px;line-height:8.200000000000001px;font-size:7.2px;color:#111">NG</div><svg style="right:0;top:0" width="9" height="9.200000000000001" viewBox="0 0 9 9.200000000000001"><rect width="9" height="9.200000000000001" fill="#f1f1f1"/><path d="M0.2 0v9.200000000000001" stroke="#d4d4d4" stroke-width="0.4"/><path d="M2.4 3.6000000000000005l2.1 2.1l2.1-2.1" stroke="#444" stroke-width="0.7" fill="none"/></svg></div>
<svg style="left:149.9px;top:237px" width="10" height="10" viewBox="0 0 10 10"><circle cx="5" cy="5" r="4.4" fill="#2c8a14" stroke="#86c070" stroke-width="0.9"/><circle cx="4.4" cy="4" r="1.8" fill="#4aa82c"/></svg>
<svg style="left:161.8px;top:237px" width="10" height="10" viewBox="0 0 10 10"><circle cx="5" cy="5" r="4.4" fill="#2c8a14" stroke="#86c070" stroke-width="0.9"/><circle cx="4.4" cy="4" r="1.8" fill="#4aa82c"/></svg>
<div style="left:0px;top:252.2px;width:190px;height:1.9px;background:#1a1fc0"></div>
<div style="left:1px;top:254.1px;width:189px;height:280px;background:#b6b6b6"></div>
<div style="left:2px;top:255px;width:24.4px;height:11.600000000000023px;background:#b6b6b6;border-left:0.8px solid #cfcfcf;border-top:0.8px solid #cfcfcf;border-right:1.2px solid #666;"></div>
<div class="t" style="left:-1.0px;width:24.4px;text-align:center;top:256.24px;height:9.52px;line-height:9.52px;font-size:6.8px;color:#222;">C8</div>
<div style="left:27.6px;top:255px;width:24.4px;height:11.600000000000023px;background:#b6b6b6;border-left:0.8px solid #cfcfcf;border-top:0.8px solid #cfcfcf;border-right:1.2px solid #666;"></div>
<div class="t" style="left:24.599999999999998px;width:24.4px;text-align:center;top:256.24px;height:9.52px;line-height:9.52px;font-size:6.8px;color:#222;">C9</div>
<div style="left:53.2px;top:255px;width:28.799999999999997px;height:11.600000000000023px;background:#b6b6b6;border-left:0.8px solid #cfcfcf;border-top:0.8px solid #cfcfcf;border-right:1.2px solid #666;"></div>
<div class="t" style="left:50.199999999999996px;width:28.799999999999997px;text-align:center;top:256.24px;height:9.52px;line-height:9.52px;font-size:6.8px;color:#222;">C10</div>
<div style="left:83px;top:255px;width:42.3px;height:11.600000000000023px;background:#b6b6b6;border-left:0.8px solid #cfcfcf;border-top:0.8px solid #cfcfcf;border-right:1.2px solid #666;"></div>
<div class="t" style="left:80.0px;width:42.3px;text-align:center;top:256.59px;height:8.82px;line-height:8.82px;font-size:6.3px;color:#222;">数据比对</div>
<div style="left:126.4px;top:255px;width:29.799999999999983px;height:11.600000000000023px;background:#b6b6b6;border-left:0.8px solid #cfcfcf;border-top:0.8px solid #cfcfcf;border-right:1.2px solid #666;"></div>
<div class="t" style="left:123.40000000000002px;width:29.799999999999983px;text-align:center;top:256.59px;height:8.82px;line-height:8.82px;font-size:6.3px;color:#222;">流程</div>
<div style="left:157.4px;top:255px;width:31.0px;height:11.600000000000023px;background:#b6b6b6;border-left:0.8px solid #cfcfcf;border-top:0.8px solid #cfcfcf;border-right:1.2px solid #666;"></div>
<div class="t" style="left:154.4px;width:31.0px;text-align:center;top:256.59px;height:8.82px;line-height:8.82px;font-size:6.3px;color:#222;">相机</div>
<div style="left:27.4px;top:267.6px;width:21.6px;height:12.0px;background:#b6b6b6;border-left:0.8px solid #cfcfcf;border-top:0.8px solid #cfcfcf;border-right:1.2px solid #666;"></div>
<div class="t" style="left:27.100000000000005px;width:21.6px;text-align:center;top:269.39px;height:8.82px;line-height:8.82px;font-size:6.3px;color:#222;">信号</div>
<div style="left:50.2px;top:267.6px;width:18.799999999999997px;height:12.0px;background:#b6b6b6;border-left:0.8px solid #cfcfcf;border-top:0.8px solid #cfcfcf;border-right:1.2px solid #666;"></div>
<div class="t" style="left:49.900000000000006px;width:18.799999999999997px;text-align:center;top:269.04px;height:9.52px;line-height:9.52px;font-size:6.8px;color:#222;">C1</div>
<div style="left:70.2px;top:267.6px;width:18.39999999999999px;height:12.0px;background:#b6b6b6;border-left:0.8px solid #cfcfcf;border-top:0.8px solid #cfcfcf;border-right:1.2px solid #666;"></div>
<div class="t" style="left:69.9px;width:18.39999999999999px;text-align:center;top:269.04px;height:9.52px;line-height:9.52px;font-size:6.8px;color:#222;">C2</div>
<div style="left:89.8px;top:267.6px;width:18.400000000000006px;height:12.0px;background:#b6b6b6;border-left:0.8px solid #cfcfcf;border-top:0.8px solid #cfcfcf;border-right:1.2px solid #666;"></div>
<div class="t" style="left:89.5px;width:18.400000000000006px;text-align:center;top:269.04px;height:9.52px;line-height:9.52px;font-size:6.8px;color:#222;">C3</div>
<div style="left:109.4px;top:267.6px;width:18.599999999999994px;height:12.0px;background:#b6b6b6;border-left:0.8px solid #cfcfcf;border-top:0.8px solid #cfcfcf;border-right:1.2px solid #666;"></div>
<div class="t" style="left:109.10000000000001px;width:18.599999999999994px;text-align:center;top:269.04px;height:9.52px;line-height:9.52px;font-size:6.8px;color:#222;">C4</div>
<div style="left:129.2px;top:267.6px;width:18.80000000000001px;height:12.0px;background:#b6b6b6;border-left:0.8px solid #cfcfcf;border-top:0.8px solid #cfcfcf;border-right:1.2px solid #666;"></div>
<div class="t" style="left:128.89999999999998px;width:18.80000000000001px;text-align:center;top:269.04px;height:9.52px;line-height:9.52px;font-size:6.8px;color:#222;">C5</div>
<div style="left:149.2px;top:267.6px;width:18.80000000000001px;height:12.0px;background:#b6b6b6;border-left:0.8px solid #cfcfcf;border-top:0.8px solid #cfcfcf;border-right:1.2px solid #666;"></div>
<div class="t" style="left:148.89999999999998px;width:18.80000000000001px;text-align:center;top:269.04px;height:9.52px;line-height:9.52px;font-size:6.8px;color:#222;">C6</div>
<div style="left:169.2px;top:267.6px;width:19.200000000000017px;height:12.0px;background:#b6b6b6;border-left:0.8px solid #cfcfcf;border-top:0.8px solid #cfcfcf;border-right:1.2px solid #666;"></div>
<div class="t" style="left:168.89999999999998px;width:19.200000000000017px;text-align:center;top:269.04px;height:9.52px;line-height:9.52px;font-size:6.8px;color:#222;">C7</div>
<div style="left:2px;top:266.2px;width:24.6px;height:14.800000000000011px;background:#b9b9b9;border-left:0.8px solid #cfcfcf;border-top:0.8px solid #cfcfcf;border-right:1.2px solid #666;"></div>
<div class="t" style="left:0.1999999999999993px;width:24.6px;text-align:center;top:269.39px;height:8.82px;line-height:8.82px;font-size:6.3px;color:#222;">统计</div>
<div style="left:1px;top:280px;width:189px;height:0.8px;background:#c8c8c8"></div>
<div style="left:2px;top:279.4px;width:24px;height:2.4px;background:#b9b9b9"></div>
<div class="t" style="left:7.2px;top:291.71px;height:9.38px;line-height:9.38px;font-size:6.7px;color:#2a5ad8;letter-spacing:-0.3px">TCP服务(9000)连接成功!</div>
<div class="t" style="left:7.2px;top:302.18px;height:9.24px;line-height:9.24px;font-size:6.6px;color:#e82020;letter-spacing:-0.2px">自动生产中......</div>
<div class="t" style="left:7.2px;top:312.18px;height:9.24px;line-height:9.24px;font-size:6.6px;color:#e82020;letter-spacing:-0.2px">9800端口连接成功 ......</div>
<div class="t" style="left:163.0px;width:10px;text-align:center;top:291.64px;height:9.52px;line-height:9.52px;font-size:6.8px;color:#3a62d8;">0</div>
<div class="t" style="left:151.4px;width:20px;text-align:center;top:301.97px;height:9.66px;line-height:9.66px;font-size:6.9px;color:#ea70d6;">01,1</div>
<div class="t" style="left:151.4px;width:20px;text-align:center;top:311.97px;height:9.66px;line-height:9.66px;font-size:6.9px;color:#ea70d6;">01,1</div>
<div style="left:5.4px;top:321.6px;width:182.4px;height:53.2px;border:1.1px solid #e63ad8"></div>
<div class="t" style="left:8.4px;top:322.97px;height:9.66px;line-height:9.66px;font-size:6.9px;color:#111;letter-spacing:-0.1px">良品盒1数量</div>
<div class="t" style="left:54.6px;top:322.97px;height:9.66px;line-height:9.66px;font-size:6.9px;color:#111;">平均速度</div>
<div style="left:7.8px;top:332.2px;width:44.6px;height:15px;background:#000"></div>
<div style="left:54.2px;top:332.2px;width:42.4px;height:15px;background:#000"></div>
<div class="t" style="left:10.4px;top:333.89px;height:14.42px;line-height:14.42px;font-size:10.3px;color:#fff;">12118</div>
<div class="t" style="left:56.6px;top:333.89px;height:14.42px;line-height:14.42px;font-size:10.3px;color:#fff;">0</div>
<div class="t" style="left:98.2px;top:333.32px;height:13.16px;line-height:13.16px;font-size:9.4px;color:#111;letter-spacing:-0.1px">PCS/Min</div>
<div class="t" style="left:164.2px;width:10px;text-align:center;top:325.92px;height:8.96px;line-height:8.96px;font-size:6.4px;color:#2a50d0;font-weight:700">0</div>
<div class="t" style="left:163.4px;top:340.58px;height:9.24px;line-height:9.24px;font-size:6.6px;color:#111;">1927</div>
<div class="t" style="left:162.8px;top:348.58px;height:9.24px;line-height:9.24px;font-size:6.6px;color:#111;">12416</div>
<div class="t" style="left:8.4px;top:347.37px;height:9.66px;line-height:9.66px;font-size:6.9px;color:#111;letter-spacing:-0.1px">良品盒2数量</div>
<div class="t" style="left:56px;top:347.37px;height:9.66px;line-height:9.66px;font-size:6.9px;color:#111;">总良率</div>
<div style="left:7.8px;top:357px;width:44.6px;height:15.2px;background:#000"></div>
<div style="left:54.2px;top:357px;width:42.4px;height:15.2px;background:#000"></div>
<div class="t" style="left:10.4px;top:358.59px;height:14.42px;line-height:14.42px;font-size:10.3px;color:#fff;">0</div>
<div class="t" style="left:55.8px;width:40px;text-align:center;top:357.67px;height:15.26px;line-height:15.26px;font-size:10.9px;color:#50e62a;font-weight:700">67.06</div>
<div class="t" style="left:100.4px;top:357.82px;height:13.16px;line-height:13.16px;font-size:9.4px;color:#111;font-weight:700">%</div>
<div class="sel" style="left:146.6px;top:359px;width:36.8px;height:10.6px;border-width:0.8px"><div class="t" style="left:1.6px;top:0.6px;height:8.0px;line-height:8.0px;font-size:6.8px;color:#111">空闲中</div><svg style="right:0;top:0" width="9" height="9.0" viewBox="0 0 9 9.0"><rect width="9" height="9.0" fill="#f1f1f1"/><path d="M0.2 0v9.0" stroke="#d4d4d4" stroke-width="0.4"/><path d="M2.4 3.5l2.1 2.1l2.1-2.1" stroke="#444" stroke-width="0.7" fill="none"/></svg></div>
<div class="t" style="left:9px;top:376.58px;height:9.24px;line-height:9.24px;font-size:6.6px;color:#111;">SN码</div>
<div class="inp" style="left:8px;top:385.2px;width:57.4px;height:11.6px;"></div>
<div style="left:72.9px;top:386px;width:18.2px;height:9.6px;background:#e6e6e6;border:0.6px solid #cdcdcd"></div>
<div class="t" style="left:73.0px;width:18px;text-align:center;top:386.32px;height:8.96px;line-height:8.96px;font-size:6.4px;color:#111;">修改</div>
<div class="t" style="left:8.8px;top:397.49px;height:9.03px;line-height:9.03px;font-size:6.45px;color:#111;letter-spacing:-0.2px">良品产出数(PCS)</div>
<div class="inp" style="left:8px;top:405.8px;width:58.2px;height:11.4px;"></div>
<div class="t" style="left:10.4px;top:406.84px;height:9.52px;line-height:9.52px;font-size:6.8px;color:#111;">16613</div>
<div class="t" style="left:8.8px;top:417.29px;height:9.03px;line-height:9.03px;font-size:6.45px;color:#111;letter-spacing:-0.2px">不良品产出数(PCS)</div>
<div class="inp" style="left:8px;top:426px;width:58.2px;height:11.6px;"></div>
<div class="t" style="left:10.4px;top:427.24px;height:9.52px;line-height:9.52px;font-size:6.8px;color:#111;">8159</div>
<svg style="left:0;top:440px" width="190" height="94" viewBox="0 440 190 94"><circle cx="104.3" cy="494.1" r="22.3" fill="#66fa0a"/><path d="M104.3 494.1L104.3 471.8A22.3 22.3 0 0 0 84.72 504.77Z" fill="#fa0a0a"/><rect x="134.3" y="485.8" width="10.4" height="10.4" fill="#66fa0a"/><rect x="134.3" y="503.4" width="10.4" height="10.6" fill="#fa0a0a"/></svg>
<div class="t" style="left:129px;top:468.79px;height:8.82px;line-height:8.82px;font-size:6.3px;color:#2444cc;font-weight:700">良率统计图</div>
<div class="t" style="left:149.6px;top:486.98px;height:9.24px;line-height:9.24px;font-size:6.6px;color:#86dc60;">67.06 %</div>
<div class="t" style="left:149.6px;top:504.78px;height:9.24px;line-height:9.24px;font-size:6.6px;color:#e02828;">32.94 %</div>
<div style="left:194.5px;top:0px;width:805.5px;height:534px;background:#fff"></div>
<svg style="left:199px;top:0.4px" width="9" height="8" viewBox="0 0 9 8"><rect x="0.5" y="1.6" width="5.2" height="2.6" fill="#7a9ad8"/><rect x="0.5" y="1.6" width="5.2" height="1" fill="#c4d8f4"/><rect x="0.2" y="4.2" width="5.8" height="0.8" fill="#e8c890"/><circle cx="7.4" cy="4.8" r="0.6" fill="#666"/></svg>
<div class="t" style="left:210.4px;top:-0.81px;height:9.03px;line-height:9.03px;font-size:6.45px;color:#8a8a8a;letter-spacing:-0.05px">东莞市瑞科智能科技有限公司 2024-3-1到期</div>
<svg style="left:936px;top:0" width="64" height="10" viewBox="0 0 64 10"><path d="M3.5 3.6h4.4" stroke="#555" stroke-width="0.6"/><rect x="27.3" y="1.4" width="4.4" height="4.4" fill="none" stroke="#555" stroke-width="0.6"/><path d="M51.4 1.4l4.4 4.4M55.8 1.4l-4.4 4.4" stroke="#555" stroke-width="0.6"/></svg>
<div style="left:194.5px;top:11.4px;width:805.5px;height:21.5px;background:#fdb30a"></div>
<div style="left:194.5px;top:32.7px;width:805.5px;height:0.9px;background:#9a8a6a"></div>
<div style="left:257px;top:11.2px;width:46px;height:21.6px;background:#5cc03a;border:0.9px solid #449a2a"></div>
<div class="t" style="left:198.2px;top:15.41px;height:13.58px;line-height:13.58px;font-size:9.7px;color:#182c74;font-weight:700;font-style:italic;letter-spacing:0.2px;transform:scaleX(1.2);transform-origin:0 50%;-webkit-text-stroke:0.55px #182c74">RKE</div>
<div class="t" style="left:224.2px;top:16.34px;height:12.32px;line-height:12.32px;font-size:8.8px;color:#54481c;font-weight:700;transform:skewX(-14deg);letter-spacing:0.6px">瑞科</div>
<div class="t" style="left:258.3px;width:44px;text-align:center;top:16.66px;height:11.48px;line-height:11.48px;font-size:8.2px;color:#d01818;font-weight:700">开始生产</div>
<div class="t" style="left:303.40000000000003px;width:44px;text-align:center;top:16.66px;height:11.48px;line-height:11.48px;font-size:8.2px;color:#b88428;font-weight:700">视觉教导</div>
<div class="t" style="left:348.5px;width:44px;text-align:center;top:16.66px;height:11.48px;line-height:11.48px;font-size:8.2px;color:#6e1212;font-weight:700">系统设置</div>
<div class="t" style="left:393.6px;width:44px;text-align:center;top:16.66px;height:11.48px;line-height:11.48px;font-size:8.2px;color:#6e1212;font-weight:700">流程管理</div>
<div class="t" style="left:438.70000000000005px;width:44px;text-align:center;top:16.66px;height:11.48px;line-height:11.48px;font-size:8.2px;color:#6e1212;font-weight:700">权限管理</div>
<div class="t" style="left:483.8px;width:44px;text-align:center;top:16.66px;height:11.48px;line-height:11.48px;font-size:8.2px;color:#6e1212;font-weight:700">模板助手</div>
<div class="t" style="left:528.9000000000001px;width:44px;text-align:center;top:16.66px;height:11.48px;line-height:11.48px;font-size:8.2px;color:#6e1212;font-weight:700">训练助手</div>
<div class="t" style="left:574.0px;width:44px;text-align:center;top:16.66px;height:11.48px;line-height:11.48px;font-size:8.2px;color:#6e1212;font-weight:700">标定助手</div>
<div class="t" style="left:619.1px;width:44px;text-align:center;top:16.66px;height:11.48px;line-height:11.48px;font-size:8.2px;color:#6e1212;font-weight:700">分类助手</div>
<div class="t" style="left:664.2px;width:44px;text-align:center;top:16.66px;height:11.48px;line-height:11.48px;font-size:8.2px;color:#6e1212;font-weight:700">裁剪工具</div>
<div class="t" style="left:709.3px;width:44px;text-align:center;top:16.66px;height:11.48px;line-height:11.48px;font-size:8.2px;color:#6e1212;font-weight:700">权限延期</div>
<div class="t" style="left:754.4000000000001px;width:44px;text-align:center;top:16.66px;height:11.48px;line-height:11.48px;font-size:8.2px;color:#6e1212;font-weight:700">光源</div>
<div class="t" style="left:799.5px;width:44px;text-align:center;top:16.66px;height:11.48px;line-height:11.48px;font-size:8.2px;color:#6e1212;font-weight:700">三友信号</div>
<div class="t" style="left:844.6000000000001px;width:44px;text-align:center;top:16.66px;height:11.48px;line-height:11.48px;font-size:8.2px;color:#6e1212;font-weight:700">注胶信号</div>
<div class="t" style="left:889.7px;width:44px;text-align:center;top:16.66px;height:11.48px;line-height:11.48px;font-size:8.2px;color:#6e1212;font-weight:700">帮助</div>
<div style="left:194.5px;top:33.4px;width:805.5px;height:31.6px;background:#f8f8f8"></div>
<svg style="left:204.70px;top:38px" width="14" height="14" viewBox="0 0 14 14"><path d="M2.7 2.4l9.4 9M12.1 2.4l-9.4 9" stroke="#da4c4c" stroke-width="3.5" stroke-linecap="butt"/></svg>
<div class="t" style="left:191.7px;width:40px;text-align:center;top:53.62px;height:8.75px;line-height:8.75px;font-size:6.25px;color:#222;">关闭</div>
<svg style="left:236.15px;top:38px" width="14" height="14" viewBox="0 0 14 14"><path d="M0.4 8c3-5 10.2-5 13.2 0c-3 4.4-10.2 4.4-13.2 0z" fill="#fff" stroke="#111" stroke-width="1.2"/><circle cx="7.2" cy="7.8" r="3.2" fill="#1a2a80"/><circle cx="7.2" cy="7.8" r="1.4" fill="#000"/><path d="M0.6 4c3.4-3.6 9.6-3.6 12.8 0.4" stroke="#111" stroke-width="1.7" fill="none"/></svg>
<div class="t" style="left:223.14999999999998px;width:40px;text-align:center;top:53.62px;height:8.75px;line-height:8.75px;font-size:6.25px;color:#222;">手动触发</div>
<svg style="left:267.60px;top:38px" width="14" height="14" viewBox="0 0 14 14"><ellipse cx="7" cy="9" rx="5.8" ry="4" fill="#9a8848" stroke="#6a5a28" stroke-width="0.6"/><ellipse cx="7" cy="8.2" rx="4" ry="2.2" fill="#d8cc90"/><path d="M5.4 1h3.2v3.6h2L7 8.4 3.4 4.6h2z" fill="#3aa02a" stroke="#1e7a14" stroke-width="0.4"/></svg>
<div class="t" style="left:254.59999999999997px;width:40px;text-align:center;top:53.62px;height:8.75px;line-height:8.75px;font-size:6.25px;color:#222;">保存图片</div>
<svg style="left:299.05px;top:38px" width="14" height="14" viewBox="0 0 14 14"><path d="M7 1.4v11.2M1.4 7h11.2" stroke="#c8d4e0" stroke-width="0.8"/></svg>
<div class="t" style="left:286.04999999999995px;width:40px;text-align:center;top:53.62px;height:8.75px;line-height:8.75px;font-size:6.25px;color:#222;">辅助线</div>
<svg style="left:330.50px;top:38px" width="14" height="14" viewBox="0 0 14 14"><circle cx="8.4" cy="5" r="3.6" fill="#dcecfa" stroke="#a8b0bc" stroke-width="1"/><path d="M5.8 7.6L2 12" stroke="#c87838" stroke-width="1.7" stroke-linecap="round"/></svg>
<div class="t" style="left:317.5px;width:40px;text-align:center;top:53.62px;height:8.75px;line-height:8.75px;font-size:6.25px;color:#222;">搜索</div>
<svg style="left:361.95px;top:38px" width="14" height="14" viewBox="0 0 14 14"><path d="M3.4 1.2h6.4l2 2.4v8.6H3.4z" fill="#e070d8" transform="rotate(-8 7 7)"/><path d="M8.6 9.4h3.6v2.6H8.6z" fill="#3a62c8"/></svg>
<div class="t" style="left:348.95px;width:40px;text-align:center;top:53.62px;height:8.75px;line-height:8.75px;font-size:6.25px;color:#222;">数据记录</div>
<svg style="left:393.40px;top:38px" width="14" height="14" viewBox="0 0 14 14"><g stroke="#a838c0" stroke-width="2.2"><path d="M7 0.4v13.2M0.4 7h13.2M2.3 2.3l9.4 9.4M11.7 2.3l-9.4 9.4"/></g><circle cx="7" cy="7" r="4" fill="#b848d0"/><path d="M5 5l4 4M9 5l-4 4" stroke="#f4e4fa" stroke-width="1.1"/><circle cx="7" cy="7" r="1" fill="#fff"/></svg>
<div class="t" style="left:380.4px;width:40px;text-align:center;top:53.62px;height:8.75px;line-height:8.75px;font-size:6.25px;color:#222;">运行参数</div>
<svg style="left:424.85px;top:38px" width="14" height="14" viewBox="0 0 14 14"><rect x="3" y="2.4" width="10" height="9.6" fill="#f2e272" stroke="#d8c850" stroke-width="0.4" transform="rotate(-8 7 7)"/><rect x="0.8" y="2" width="6.4" height="3.6" rx="0.6" fill="#20242c" transform="rotate(-20 4 4)"/><rect x="2.2" y="3" width="3" height="1.2" fill="#4a8ae0" transform="rotate(-20 4 4)"/></svg>
<div class="t" style="left:411.85px;width:40px;text-align:center;top:53.62px;height:8.75px;line-height:8.75px;font-size:6.25px;color:#222;">数据清零</div>
<svg style="left:456.30px;top:38px" width="14" height="14" viewBox="0 0 14 14"><g stroke="#ecd050" stroke-width="1.3"><path d="M7 0.8v12.4M0.8 7h12.4M2.6 2.6l8.8 8.8M11.4 2.6l-8.8 8.8M4.6 1.2l4.8 11.6M9.4 1.2L4.6 12.8M1.2 4.6l11.6 4.8M1.2 9.4l11.6-4.8"/></g><circle cx="7" cy="7" r="3.7" fill="#f4e27a" stroke="#e0c040" stroke-width="0.6"/><circle cx="7" cy="7" r="2" fill="#fbf0a8"/></svg>
<div class="t" style="left:443.29999999999995px;width:40px;text-align:center;top:53.62px;height:8.75px;line-height:8.75px;font-size:6.25px;color:#222;">光源控制</div>
<div class="t" style="left:478.35px;width:30px;text-align:center;top:35.72px;height:17.36px;line-height:17.36px;font-size:12.4px;color:#000;font-weight:700;letter-spacing:-0.4px;transform:scaleX(0.82);-webkit-text-stroke:0.5px #000">3D</div>
<div class="t" style="left:474.75px;width:40px;text-align:center;top:53.62px;height:8.75px;line-height:8.75px;font-size:6.25px;color:#222;">3D计算</div>
<svg style="left:519.20px;top:38px" width="14" height="14" viewBox="0 0 14 14"><circle cx="7" cy="7.2" r="5.4" fill="#d8783a" stroke="#b05a24" stroke-width="0.6"/><circle cx="7" cy="7.2" r="3.4" fill="#8a8a90"/><circle cx="7" cy="6.6" r="1.8" fill="#c8c8d0"/><circle cx="7" cy="10" r="0.7" fill="#e8e8e8"/></svg>
<div class="t" style="left:506.20000000000005px;width:40px;text-align:center;top:53.62px;height:8.75px;line-height:8.75px;font-size:6.25px;color:#222;">帮助</div>
<svg style="left:550.65px;top:38px" width="14" height="14" viewBox="0 0 14 14"><circle cx="7" cy="7.2" r="5.6" fill="#5ab82e" stroke="#3a8a1a" stroke-width="0.6"/><ellipse cx="7" cy="5" rx="3.8" ry="2.2" fill="#a0e070" opacity="0.7"/><circle cx="5" cy="6" r="0.7" fill="#1a3a0a"/><circle cx="9" cy="6" r="0.7" fill="#1a3a0a"/><path d="M3.4 8.2c1.6 3 5.6 3 7.2 0z" fill="#fff" stroke="#2a5a14" stroke-width="0.4"/></svg>
<div class="t" style="left:537.65px;width:40px;text-align:center;top:53.62px;height:8.75px;line-height:8.75px;font-size:6.25px;color:#222;">版本信息</div>
<div style="left:194.5px;top:65px;width:805.5px;height:1px;background:#8c8c8c"></div>
<div style="left:194.5px;top:66px;width:400.7px;height:9.6px;background:#3d6db5"></div>
<div style="left:598.2px;top:66px;width:401.8px;height:9.6px;background:#3d6db5"></div>
<div class="t" style="left:198.6px;top:69.49px;height:7.42px;line-height:7.42px;font-size:5.3px;color:#fff;font-family:Liberation Mono,monospace;font-weight:700;letter-spacing:0">CCD1 4096x2000 0.19X (-1,-1)</div>
<svg style="left:290.6px;top:68.4px" width="7" height="7" viewBox="0 0 7 7"><circle cx="3.5" cy="3.5" r="3" fill="#fff"/><path d="M1.4 5.6A3 3 0 0 0 5.6 1.4z" fill="#111"/></svg>
<div class="t" style="left:298.1px;top:69.49px;height:7.42px;line-height:7.42px;font-size:5.3px;color:#fff;font-family:Liberation Mono,monospace;font-weight:700">-1</div>
<div class="t" style="left:554.4px;width:40px;text-align:right;top:69.49px;height:7.42px;line-height:7.42px;font-size:5.3px;color:#fff;font-family:Liberation Mono,monospace;font-weight:700">0.00ms</div>
<div class="t" style="left:602px;top:69.49px;height:7.42px;line-height:7.42px;font-size:5.3px;color:#fff;font-family:Liberation Mono,monospace;font-weight:700;letter-spacing:0">CCD2 2448x2048 0.27X (-1,-1)</div>
<svg style="left:694px;top:68.4px" width="7" height="7" viewBox="0 0 7 7"><circle cx="3.5" cy="3.5" r="3" fill="#fff"/><path d="M1.4 5.6A3 3 0 0 0 5.6 1.4z" fill="#111"/></svg>
<div class="t" style="left:701.5px;top:69.49px;height:7.42px;line-height:7.42px;font-size:5.3px;color:#fff;font-family:Liberation Mono,monospace;font-weight:700">-1</div>
<div class="t" style="left:958.6px;width:40px;text-align:right;top:69.49px;height:7.42px;line-height:7.42px;font-size:5.3px;color:#fff;font-family:Liberation Mono,monospace;font-weight:700">0.00ms</div>
<div style="left:194.5px;top:75.6px;width:400.7px;height:295.6px;background:#dcdcdc"></div>
<div style="left:598.2px;top:75.6px;width:401.8px;height:295.6px;background:#dcdcdc"></div>
<div style="left:595.4px;top:65px;width:2.6px;height:306.4px;background:#6a6a6a"></div>
<div style="left:997.6px;top:65px;width:2.4px;height:306.4px;background:#5c5c5c"></div>
<div style="left:199.2px;top:125.8px;width:394.7px;height:195.6px;background:#fff"></div>
<svg style="left:195px;top:120px" width="401" height="205" viewBox="195 120 401 205" fill="none" stroke="#24d824" stroke-width="0.95"><defs><linearGradient id="bd" x1="0" y1="0" x2="0" y2="1"><stop offset="0" stop-color="#000"/><stop offset="0.8" stop-color="#020202"/><stop offset="1" stop-color="#121212"/></linearGradient><clipPath id="bc"><path d="M231 225H530.6L564.6 235.8Q571.6 243 564.6 250.2L530.6 260H231z"/></clipPath><filter id="bl"><feGaussianBlur stdDeviation="2"/></filter></defs><path d="M231 225H530.6L564.6 235.8Q571.6 243 564.6 250.2L530.6 260H231z" fill="url(#bd)" stroke="none"/><g clip-path="url(#bc)"><path d="M455 250H545L566 249L530.6 262H465z" fill="#333" stroke="none" opacity="0.6" filter="url(#bl)"/></g><path d="M204.4 321.4V149.4H590.7V321.4"/><path d="M225 243H572" stroke-width="0.95"/><rect x="237.4" y="214.4" width="45.2" height="20.0"/><rect x="238.4" y="252.6" width="57.2" height="14.4"/><rect x="286.6" y="203.4" width="31.8" height="41.6"/><rect x="284.4" y="240" width="32.0" height="41.4"/><rect x="307.4" y="216.6" width="73.2" height="17.8"/><rect x="308.6" y="248.6" width="72.0" height="23.4"/><rect x="221.6" y="232.4" width="9.4" height="20.6"/><rect x="428" y="204" width="33.4" height="41.0"/><rect x="430" y="239.4" width="33.6" height="41.2"/><rect x="472.4" y="203" width="42.0" height="41.4"/><rect x="475.6" y="244" width="39.4" height="33.4"/><path d="M343.4 225V259.5"/><path d="M538.0 220.4L566.0 228.6L562.6 240.6L534.4 233.0z"/><path d="M536.0 249.4L562.6 244.6L565.4 257.0L540.0 265.4z"/><rect x="569.4" y="235.6" width="4.8" height="5.0"/><rect x="569.4" y="244.6" width="4.8" height="4.8"/><path d="M256.2 235.2L263.0 235.2L259.6 241.2z"/><path d="M263.2 252.4L270.0 252.4L266.6 246.4z"/><path d="M297.0 241.4L300.6 234.0L304.2 241.4z"/><path d="M299.0 244.2L302.6 251.6L306.2 244.2z"/><path d="M340.4 235.4L346.4 235.4L343.4 241.4z"/><path d="M444.0 240.6L447.2 233.9L450.4 240.6z"/><path d="M441.6 245.4L447.5 245.4L444.4 251.5z"/><path d="M490.4 243.0L494.9 237.4L498.7 243.0L493.6 251.5z"/><path d="M545.6 239.0L551.6 246.0L545.0 246.4L551.0 239.4z"/><path d="M561.0 239.6L566.0 243.0L561.0 246.4z"/><path d="M225.8 218.6L227.8 217.2L238.8 233.4L236.8 234.8z"/><path d="M228.6 262.0L230.6 263.4L239.8 252.8L237.8 251.4z"/><path d="M234.6 230.4l5.2 3.8-2.4-5.8zM232.6 254.2l6.6-2.6-3 5.4zM239.5 239.6l6.2 3.2-6.2 3.6"/><path d="M226.4 242.8h8.4" stroke-width="2"/><ellipse cx="568.6" cy="243" rx="3" ry="3.2" fill="#24d824" opacity="0.85"/><circle cx="530.4" cy="243" r="0.9" fill="#24d824"/><circle cx="530.4" cy="225.2" r="0.8" fill="#24d824"/><circle cx="530.4" cy="259.8" r="0.8" fill="#24d824"/></svg>
<div class="t" style="left:209.8px;top:130.98px;height:12.04px;line-height:12.04px;font-size:8.6px;color:#2fd42f;font-weight:700">00,Y</div>
<div class="t" style="left:245px;top:129.28px;height:13.23px;line-height:13.23px;font-size:9.45px;color:#2fd42f;font-weight:700"><span style="font-weight:500">①全长</span>31.222</div>
<div class="t" style="left:392.2px;top:129.28px;height:13.23px;line-height:13.23px;font-size:9.45px;color:#2fd42f;font-weight:700"><span style="font-weight:500">⑦倒角</span>2<span style="font-weight:500">角度②</span>164.614</div>
<div class="t" style="left:245px;top:139.06px;height:13.23px;line-height:13.23px;font-size:9.45px;color:#2fd42f;font-weight:700"><span style="font-weight:500">②倒角</span>1<span style="font-weight:500">角度①</span>148.191</div>
<div class="t" style="left:392.2px;top:139.06px;height:13.23px;line-height:13.23px;font-size:9.45px;color:#2fd42f;font-weight:700"><span style="font-weight:500">⑧倒角②直径</span>0.156</div>
<div class="t" style="left:245px;top:148.84px;height:13.23px;line-height:13.23px;font-size:9.45px;color:#2fd42f;font-weight:700"><span style="font-weight:500">③倒角</span>1<span style="font-weight:500">角度②</span>150.179</div>
<div class="t" style="left:392.2px;top:148.84px;height:13.23px;line-height:13.23px;font-size:9.45px;color:#2fd42f;font-weight:700"><span style="font-weight:500">⑨倒角②宽度</span>0.359</div>
<div class="t" style="left:245px;top:158.62px;height:13.23px;line-height:13.23px;font-size:9.45px;color:#2fd42f;font-weight:700"><span style="font-weight:500">④倒角</span>1<span style="font-weight:500">直径</span>0.349</div>
<div class="t" style="left:392.2px;top:158.62px;height:13.23px;line-height:13.23px;font-size:9.45px;color:#2fd42f;font-weight:700"><span style="font-weight:500">⑩顶角角度</span>154.957</div>
<div class="t" style="left:245px;top:168.41px;height:13.23px;line-height:13.23px;font-size:9.45px;color:#2fd42f;font-weight:700"><span style="font-weight:500">⑤倒角</span>1<span style="font-weight:500">宽度</span>0.031</div>
<div class="t" style="left:392.2px;top:168.41px;height:13.23px;line-height:13.23px;font-size:9.45px;color:#2fd42f;font-weight:700"><span style="font-weight:500">⒒顶角宽度</span>0.027</div>
<div class="t" style="left:245px;top:178.19px;height:13.23px;line-height:13.23px;font-size:9.45px;color:#2fd42f;font-weight:700"><span style="font-weight:500">⑥倒角</span>2<span style="font-weight:500">角度①</span>164.688</div>
<div class="t" style="left:392.2px;top:178.19px;height:13.23px;line-height:13.23px;font-size:9.45px;color:#2fd42f;font-weight:700"><span style="font-weight:500">⒓垂直度</span>89.631</div>
<div class="t" style="left:384px;top:241.10px;height:12.60px;line-height:12.60px;font-size:9px;color:#2fd42f;font-weight:700">31.2220</div>
<div class="t" style="left:336px;top:241.44px;height:6.72px;line-height:6.72px;font-size:4.8px;color:#2fd42f;font-weight:700">3.3x1</div>
<div style="left:195px;top:205px;width:7px;height:12px;background:linear-gradient(#dcdcdc,#aaa 30%,#e4e4e4 50%,#bbb 70%,#dcdcdc);opacity:.8"></div>
<div style="left:195px;top:262px;width:5px;height:7px;background:linear-gradient(#dcdcdc,#bbb 40%,#e4e4e4 60%,#dcdcdc);opacity:.7"></div>
<div style="left:194.5px;top:76.4px;width:67.6px;height:22.2px;background:#fff"></div>
<div class="t" style="left:195.4px;top:75.38px;height:9.24px;line-height:9.24px;font-size:6.6px;color:#2a9cb4;letter-spacing:-0.1px">OK=5300 良率=99.94%</div>
<div class="t" style="left:195.4px;top:82.68px;height:9.24px;line-height:9.24px;font-size:6.6px;color:#ea6a6a;letter-spacing:-0.1px">NG=3 不良率=0.06%</div>
<div class="t" style="left:195.4px;top:90.08px;height:9.24px;line-height:9.24px;font-size:6.6px;color:#2a9cb4;letter-spacing:-0.1px">总数=5303 检测=14ms</div>
<div style="left:553px;top:75.6px;width:42.2px;height:27px;background:#14f014"></div>
<div class="t" style="left:552.6px;width:44px;text-align:center;top:72.40px;height:36.40px;line-height:36.40px;font-size:26px;color:#000;">OK</div>
<div style="left:621.6px;top:75.6px;width:351.7px;height:295.4px;background:#fff"></div>
<svg style="left:598px;top:75px" width="402" height="296" viewBox="598 75 402 296" fill="none" stroke="#24d824" stroke-width="0.75"><path d="M621.6 202.5L776 209.5L896.2 247L899.8 267.4L893.4 285.6L776 315.4L621.6 310.2z" fill="#020202" stroke="none"/><rect x="632" y="95.2" width="329.4" height="266.1" stroke="#4ade4a" stroke-width="0.65"/><path d="M621.6 188.4L687.7 192.0L686.2 219.5L621.6 216.5z"/><path d="M621.6 290.2L681.4 293.2L679.6 332.0L621.6 328.2z"/><path d="M648.6 203.6L643 311.6"/><path d="M645.2 218.0L651.0 218.2L648.0 224.6z"/><path d="M640.8 293.2L646.8 293.4L644.0 286.6z"/><path d="M838.9 214.9L881.6 229.1L874.5 253.3L831.8 239.1z"/><path d="M828.3 294.2L878.4 282.4L882.7 300.9L832.2 312.7z"/><path d="M888.0 253.3L904.7 249.4L907.6 259.3L890.8 263.6z"/><path d="M888.0 271.0L908.3 276.4L904.7 286.0L885.2 279.6z"/><path d="M849.1 245.7L855.1 247.7L850.8 252.3z"/><path d="M850.6 287.4L852.6 281.6L855.6 286.2z"/><path d="M882.6 259.0L888.4 255.6L888.8 261.4z"/><path d="M880.6 272.6L886.8 269.8L887.2 276.4z"/><path d="M895 246L893 288"/><circle cx="836.4" cy="262.9" r="1.4" fill="#2020c8" stroke="none"/><path d="M892.6 267l4.4 3.4M897 267l-4.4 3.4" stroke-width="0.7"/><circle cx="972.3" cy="271" r="0.8" fill="#3ad63a" stroke="none"/></svg>
<div class="t" style="left:635px;top:82.49px;height:14.21px;line-height:14.21px;font-size:10.15px;color:#2fd42f;font-weight:700"><span style="font-weight:500">①顶端夹角</span>30.705</div>
<div class="t" style="left:635px;top:92.54px;height:14.21px;line-height:14.21px;font-size:10.15px;color:#2fd42f;font-weight:700"><span style="font-weight:500">②顶端倒角角度</span>118.921</div>
<div class="t" style="left:635px;top:102.59px;height:14.21px;line-height:14.21px;font-size:10.15px;color:#2fd42f;font-weight:700"><span style="font-weight:500">③顶端倒角角度</span>120.483</div>
<div class="t" style="left:635px;top:112.64px;height:14.21px;line-height:14.21px;font-size:10.15px;color:#2fd42f;font-weight:700"><span style="font-weight:500">④两倒角角度之间夹角角度</span>151.301</div>
<div class="t" style="left:635px;top:122.70px;height:14.21px;line-height:14.21px;font-size:10.15px;color:#2fd42f;font-weight:700"><span style="font-weight:500">⑤两倒角之间交点距离</span>0.151</div>
<div class="t" style="left:632.3px;top:255.38px;height:12.04px;line-height:12.04px;font-size:8.6px;color:#2fd42f;font-weight:700">1.0424</div>
<div style="left:598.2px;top:75.6px;width:73.8px;height:22.8px;background:#fff"></div>
<div class="t" style="left:599px;top:75.38px;height:9.24px;line-height:9.24px;font-size:6.6px;color:#2a9cb4;letter-spacing:-0.1px">OK=841 良率=15.87%</div>
<div class="t" style="left:599px;top:82.68px;height:9.24px;line-height:9.24px;font-size:6.6px;color:#ea6a6a;letter-spacing:-0.1px">NG=4457 不良率=84.13%</div>
<div class="t" style="left:599px;top:90.08px;height:9.24px;line-height:9.24px;font-size:6.6px;color:#2a9cb4;letter-spacing:-0.1px">总数=5298 检测=5ms</div>
<div style="left:956px;top:75.6px;width:41.6px;height:27px;background:#14f014"></div>
<div class="t" style="left:955.2px;width:44px;text-align:center;top:72.40px;height:36.40px;line-height:36.40px;font-size:26px;color:#000;">OK</div>
<div style="left:194.5px;top:371px;width:805.5px;height:1.1px;background:#a8acb6"></div>
<div style="left:194.5px;top:372px;width:805.5px;height:9.9px;background:#3d6db5"></div>
<svg style="left:197.4px;top:373.5px" width="7" height="7" viewBox="0 0 7 7"><rect x="0.3" y="0.3" width="6.4" height="6.4" fill="#eaf2fc" stroke="#bcd" stroke-width="0.5"/><path d="M0.3 2.2h6.4M2.4 2.2v4.5M4.6 2.2v4.5M0.3 4.4h6.4" stroke="#6a9ad8" stroke-width="0.5"/></svg>
<div class="t" style="left:205.8px;top:372.96px;height:8.68px;line-height:8.68px;font-size:6.2px;color:#fff;font-weight:500">简易报表</div>
<div style="left:194.5px;top:381.9px;width:805.5px;height:152px;background:#fff"></div>
<div style="left:194.5px;top:381.9px;width:805.5px;height:11px;background:#ececec"></div>
<div style="left:194.5px;top:382.1px;width:457.5px;height:10.6px;background:linear-gradient(#f0f0f0,#dedede);border-bottom:1px solid #bcbcbc"></div>
<div class="t" style="left:195.0px;width:79px;text-align:center;top:383.16px;height:8.68px;line-height:8.68px;font-size:6.2px;color:#222;font-weight:500;letter-spacing:-0.15px">行名称</div>
<div style="left:273.5px;top:382.1px;width:1px;height:10.6px;background:#c8c8c8"></div>
<div class="t" style="left:274.0px;width:31.5px;text-align:center;top:383.16px;height:8.68px;line-height:8.68px;font-size:6.2px;color:#222;font-weight:500;letter-spacing:-0.15px">结果</div>
<div style="left:305.0px;top:382.1px;width:1px;height:10.6px;background:#c8c8c8"></div>
<div class="t" style="left:305.5px;width:31.5px;text-align:center;top:383.16px;height:8.68px;line-height:8.68px;font-size:6.2px;color:#222;font-weight:500;letter-spacing:-0.15px">结果字符串</div>
<div style="left:336.5px;top:382.1px;width:1px;height:10.6px;background:#c8c8c8"></div>
<div class="t" style="left:337.0px;width:31.5px;text-align:center;top:383.16px;height:8.68px;line-height:8.68px;font-size:6.2px;color:#222;font-weight:500;letter-spacing:-0.15px">下限值</div>
<div style="left:368.0px;top:382.1px;width:1px;height:10.6px;background:#c8c8c8"></div>
<div class="t" style="left:368.5px;width:31.5px;text-align:center;top:383.16px;height:8.68px;line-height:8.68px;font-size:6.2px;color:#222;font-weight:500;letter-spacing:-0.15px">上限值</div>
<div style="left:399.5px;top:382.1px;width:1px;height:10.6px;background:#c8c8c8"></div>
<div class="t" style="left:400.0px;width:31.5px;text-align:center;top:383.16px;height:8.68px;line-height:8.68px;font-size:6.2px;color:#222;font-weight:500;letter-spacing:-0.15px">超下限数</div>
<div style="left:431.0px;top:382.1px;width:1px;height:10.6px;background:#c8c8c8"></div>
<div class="t" style="left:431.5px;width:31.5px;text-align:center;top:383.16px;height:8.68px;line-height:8.68px;font-size:6.2px;color:#222;font-weight:500;letter-spacing:-0.15px">超上限数</div>
<div style="left:462.5px;top:382.1px;width:1px;height:10.6px;background:#c8c8c8"></div>
<div class="t" style="left:463.0px;width:31.5px;text-align:center;top:383.16px;height:8.68px;line-height:8.68px;font-size:6.2px;color:#222;font-weight:500;letter-spacing:-0.15px">良品数</div>
<div style="left:494.0px;top:382.1px;width:1px;height:10.6px;background:#c8c8c8"></div>
<div class="t" style="left:494.5px;width:31.5px;text-align:center;top:383.16px;height:8.68px;line-height:8.68px;font-size:6.2px;color:#222;font-weight:500;letter-spacing:-0.15px">不良品数</div>
<div style="left:525.5px;top:382.1px;width:1px;height:10.6px;background:#c8c8c8"></div>
<div class="t" style="left:526.0px;width:31.5px;text-align:center;top:383.16px;height:8.68px;line-height:8.68px;font-size:6.2px;color:#222;font-weight:500;letter-spacing:-0.15px">总数</div>
<div style="left:557.0px;top:382.1px;width:1px;height:10.6px;background:#c8c8c8"></div>
<div class="t" style="left:557.5px;width:31.5px;text-align:center;top:383.16px;height:8.68px;line-height:8.68px;font-size:6.2px;color:#222;font-weight:500;letter-spacing:-0.15px">良品率</div>
<div style="left:588.5px;top:382.1px;width:1px;height:10.6px;background:#c8c8c8"></div>
<div class="t" style="left:589.0px;width:31.5px;text-align:center;top:383.16px;height:8.68px;line-height:8.68px;font-size:6.2px;color:#222;font-weight:500;letter-spacing:-0.15px">不良率</div>
<div style="left:620.0px;top:382.1px;width:1px;height:10.6px;background:#c8c8c8"></div>
<div class="t" style="left:620.5px;width:31.5px;text-align:center;top:383.16px;height:8.68px;line-height:8.68px;font-size:6.2px;color:#222;font-weight:500;letter-spacing:-0.15px">检测时间</div>
<div style="left:651.5px;top:382.1px;width:1px;height:10.6px;background:#c8c8c8"></div>
<div style="left:194.5px;top:394.09999999999997px;width:805.5px;height:0.8px;background:#ebebeb"></div>
<div style="left:194.5px;top:404.55999999999995px;width:805.5px;height:0.8px;background:#ebebeb"></div>
<div style="left:194.5px;top:415.02px;width:805.5px;height:0.8px;background:#ebebeb"></div>
<div style="left:194.5px;top:425.47999999999996px;width:805.5px;height:0.8px;background:#ebebeb"></div>
<div style="left:194.5px;top:435.94px;width:805.5px;height:0.8px;background:#ebebeb"></div>
<div style="left:194.5px;top:446.4px;width:805.5px;height:0.8px;background:#ebebeb"></div>
<div style="left:194.5px;top:456.85999999999996px;width:805.5px;height:0.8px;background:#ebebeb"></div>
<div style="left:194.5px;top:467.32px;width:805.5px;height:0.8px;background:#ebebeb"></div>
<div style="left:194.5px;top:477.78px;width:805.5px;height:0.8px;background:#ebebeb"></div>
<div style="left:194.5px;top:488.23999999999995px;width:805.5px;height:0.8px;background:#ebebeb"></div>
<div style="left:194.5px;top:498.7px;width:805.5px;height:0.8px;background:#ebebeb"></div>
<div style="left:194.5px;top:509.15999999999997px;width:805.5px;height:0.8px;background:#ebebeb"></div>
<div style="left:194.5px;top:519.62px;width:805.5px;height:0.8px;background:#ebebeb"></div>
<div style="left:194.5px;top:530.08px;width:805.5px;height:0.8px;background:#ebebeb"></div>
<div style="left:273.6px;top:394.4px;width:0.8px;height:135.98000000000002px;background:#ebebeb"></div>
<div style="left:305.1px;top:394.4px;width:0.8px;height:135.98000000000002px;background:#ebebeb"></div>
<div style="left:336.6px;top:394.4px;width:0.8px;height:135.98000000000002px;background:#ebebeb"></div>
<div style="left:368.1px;top:394.4px;width:0.8px;height:135.98000000000002px;background:#ebebeb"></div>
<div style="left:399.6px;top:394.4px;width:0.8px;height:135.98000000000002px;background:#ebebeb"></div>
<div style="left:431.1px;top:394.4px;width:0.8px;height:135.98000000000002px;background:#ebebeb"></div>
<div style="left:462.6px;top:394.4px;width:0.8px;height:135.98000000000002px;background:#ebebeb"></div>
<div style="left:494.1px;top:394.4px;width:0.8px;height:135.98000000000002px;background:#ebebeb"></div>
<div style="left:525.6px;top:394.4px;width:0.8px;height:135.98000000000002px;background:#ebebeb"></div>
<div style="left:557.1px;top:394.4px;width:0.8px;height:135.98000000000002px;background:#ebebeb"></div>
<div style="left:588.6px;top:394.4px;width:0.8px;height:135.98000000000002px;background:#ebebeb"></div>
<div style="left:620.1px;top:394.4px;width:0.8px;height:135.98000000000002px;background:#ebebeb"></div>
<div style="left:651.6px;top:394.4px;width:0.8px;height:135.98000000000002px;background:#ebebeb"></div>
<svg style="left:199.2px;top:396.93px" width="22" height="7" viewBox="0 0 22 7"><rect x="0.4" y="1" width="4.4" height="4.4" fill="#fff" stroke="#aaa" stroke-width="0.5"/><path d="M1.4 3.2h2.4" stroke="#555" stroke-width="0.5"/><path d="M5 3.2h3" stroke="#bbb" stroke-width="0.4"/><rect x="9.6" y="0.4" width="7.6" height="6" fill="#eaf2fc" stroke="#7aa0d0" stroke-width="0.6"/><rect x="9.6" y="0.4" width="7.6" height="1.8" fill="#6a9ad8"/><rect x="11" y="3" width="2.4" height="2.4" fill="#e8c050"/></svg>
<div class="t" style="left:219.5px;top:396.12px;height:8.82px;line-height:8.82px;font-size:6.3px;color:#111;">CCD1</div>
<div class="t" style="left:244.4px;top:397.26px;height:7.14px;line-height:7.14px;font-size:5.1px;color:#86c426;font-family:Liberation Mono,monospace;font-weight:700">14.114 ms</div>
<div class="t" style="left:273.75px;width:32px;text-align:center;top:396.05px;height:8.96px;line-height:8.96px;font-size:6.4px;color:#222;">1</div>
<div class="t" style="left:305.25px;width:32px;text-align:center;top:396.05px;height:8.96px;line-height:8.96px;font-size:6.4px;color:#222;">OK</div>
<div class="t" style="left:462.75px;width:32px;text-align:center;top:396.05px;height:8.96px;line-height:8.96px;font-size:6.4px;color:#222;">5300</div>
<div class="t" style="left:494.25px;width:32px;text-align:center;top:396.05px;height:8.96px;line-height:8.96px;font-size:6.4px;color:#222;">3</div>
<div class="t" style="left:525.75px;width:32px;text-align:center;top:396.05px;height:8.96px;line-height:8.96px;font-size:6.4px;color:#222;">5303</div>
<div class="t" style="left:557.25px;width:32px;text-align:center;top:396.05px;height:8.96px;line-height:8.96px;font-size:6.4px;color:#222;">99.94%</div>
<div class="t" style="left:588.75px;width:32px;text-align:center;top:396.05px;height:8.96px;line-height:8.96px;font-size:6.4px;color:#222;">0.06%</div>
<div class="t" style="left:620.25px;width:32px;text-align:center;top:396.05px;height:8.96px;line-height:8.96px;font-size:6.4px;color:#222;">14.114</div>
<svg style="left:205px;top:405.76px" width="32" height="10.5" viewBox="0 0 32 10.5"><path d="M6.4 0v10.5M6.4 5.2h7.6" stroke="#c4c4c4" stroke-width="0.4"/></svg>
<svg style="left:219px;top:407.59px" width="8" height="7" viewBox="0 0 8 7"><path d="M1.6 1.6L6 5.6" stroke="#666" stroke-width="0.5"/><circle cx="1.6" cy="1.6" r="0.9" fill="#222"/><circle cx="6" cy="5.6" r="0.9" fill="#222"/></svg>
<div class="t" style="left:229.5px;top:406.65px;height:8.68px;line-height:8.68px;font-size:6.2px;color:#222;font-weight:700;letter-spacing:-0.2px">全长</div>
<div class="t" style="left:243.8px;width:30px;text-align:right;top:408.02px;height:7.14px;line-height:7.14px;font-size:5.1px;color:#86c426;font-family:Liberation Mono,monospace;font-weight:700">0.005 r</div>
<div class="t" style="left:273.75px;width:32px;text-align:center;top:406.51px;height:8.96px;line-height:8.96px;font-size:6.4px;color:#222;">1</div>
<div class="t" style="left:305.25px;width:32px;text-align:center;top:406.51px;height:8.96px;line-height:8.96px;font-size:6.4px;color:#222;">OK</div>
<div class="t" style="left:336.75px;width:32px;text-align:center;top:406.51px;height:8.96px;line-height:8.96px;font-size:6.4px;color:#222;">0.000</div>
<div class="t" style="left:368.25px;width:32px;text-align:center;top:406.51px;height:8.96px;line-height:8.96px;font-size:6.4px;color:#222;">0.000</div>
<div class="t" style="left:399.75px;width:32px;text-align:center;top:406.51px;height:8.96px;line-height:8.96px;font-size:6.4px;color:#222;">0</div>
<div class="t" style="left:431.25px;width:32px;text-align:center;top:406.51px;height:8.96px;line-height:8.96px;font-size:6.4px;color:#222;">0</div>
<div class="t" style="left:462.75px;width:32px;text-align:center;top:406.51px;height:8.96px;line-height:8.96px;font-size:6.4px;color:#222;">36</div>
<div class="t" style="left:494.25px;width:32px;text-align:center;top:406.51px;height:8.96px;line-height:8.96px;font-size:6.4px;color:#222;">0</div>
<div class="t" style="left:525.75px;width:32px;text-align:center;top:406.51px;height:8.96px;line-height:8.96px;font-size:6.4px;color:#222;">36</div>
<div class="t" style="left:557.25px;width:32px;text-align:center;top:406.51px;height:8.96px;line-height:8.96px;font-size:6.4px;color:#222;">100.00%</div>
<div class="t" style="left:588.75px;width:32px;text-align:center;top:406.51px;height:8.96px;line-height:8.96px;font-size:6.4px;color:#222;">0.00%</div>
<div class="t" style="left:620.25px;width:32px;text-align:center;top:406.51px;height:8.96px;line-height:8.96px;font-size:6.4px;color:#222;">0.005</div>
<svg style="left:205px;top:416.22px" width="32" height="10.5" viewBox="0 0 32 10.5"><path d="M6.4 0v10.5M6.4 5.2h7.6" stroke="#c4c4c4" stroke-width="0.4"/></svg>
<svg style="left:219px;top:418.05px" width="8" height="7" viewBox="0 0 8 7"><path d="M0.6 6.2L5.4 0.8M0.6 6.2H7.6" stroke="#c04848" stroke-width="0.7" fill="none"/><path d="M3.4 6.2a2.8 2.8 0 0 0-1-2.2" stroke="#4a68c0" stroke-width="0.6" fill="none"/></svg>
<div class="t" style="left:229.5px;top:417.11px;height:8.68px;line-height:8.68px;font-size:6.2px;color:#222;font-weight:700;letter-spacing:-0.2px">线段交点夹角1</div>
<div class="t" style="left:273.75px;width:32px;text-align:center;top:416.97px;height:8.96px;line-height:8.96px;font-size:6.4px;color:#222;">1</div>
<div class="t" style="left:305.25px;width:32px;text-align:center;top:416.97px;height:8.96px;line-height:8.96px;font-size:6.4px;color:#222;">OK</div>
<div class="t" style="left:336.75px;width:32px;text-align:center;top:416.97px;height:8.96px;line-height:8.96px;font-size:6.4px;color:#222;">0.000</div>
<div class="t" style="left:368.25px;width:32px;text-align:center;top:416.97px;height:8.96px;line-height:8.96px;font-size:6.4px;color:#222;">0.000</div>
<div class="t" style="left:399.75px;width:32px;text-align:center;top:416.97px;height:8.96px;line-height:8.96px;font-size:6.4px;color:#222;">0</div>
<div class="t" style="left:431.25px;width:32px;text-align:center;top:416.97px;height:8.96px;line-height:8.96px;font-size:6.4px;color:#222;">0</div>
<div class="t" style="left:462.75px;width:32px;text-align:center;top:416.97px;height:8.96px;line-height:8.96px;font-size:6.4px;color:#222;">36</div>
<div class="t" style="left:494.25px;width:32px;text-align:center;top:416.97px;height:8.96px;line-height:8.96px;font-size:6.4px;color:#222;">0</div>
<div class="t" style="left:525.75px;width:32px;text-align:center;top:416.97px;height:8.96px;line-height:8.96px;font-size:6.4px;color:#222;">36</div>
<div class="t" style="left:557.25px;width:32px;text-align:center;top:416.97px;height:8.96px;line-height:8.96px;font-size:6.4px;color:#222;">100.00%</div>
<div class="t" style="left:588.75px;width:32px;text-align:center;top:416.97px;height:8.96px;line-height:8.96px;font-size:6.4px;color:#222;">0.00%</div>
<div class="t" style="left:620.25px;width:32px;text-align:center;top:416.97px;height:8.96px;line-height:8.96px;font-size:6.4px;color:#222;">0.002</div>
<svg style="left:205px;top:426.68px" width="32" height="10.5" viewBox="0 0 32 10.5"><path d="M6.4 0v10.5M6.4 5.2h7.6" stroke="#c4c4c4" stroke-width="0.4"/></svg>
<svg style="left:219px;top:428.51px" width="8" height="7" viewBox="0 0 8 7"><path d="M0.6 6.2L5.4 0.8M0.6 6.2H7.6" stroke="#c04848" stroke-width="0.7" fill="none"/><path d="M3.4 6.2a2.8 2.8 0 0 0-1-2.2" stroke="#4a68c0" stroke-width="0.6" fill="none"/></svg>
<div class="t" style="left:229.5px;top:427.57px;height:8.68px;line-height:8.68px;font-size:6.2px;color:#222;font-weight:700;letter-spacing:-0.2px">线段交点夹角2</div>
<div class="t" style="left:273.75px;width:32px;text-align:center;top:427.43px;height:8.96px;line-height:8.96px;font-size:6.4px;color:#222;">1</div>
<div class="t" style="left:305.25px;width:32px;text-align:center;top:427.43px;height:8.96px;line-height:8.96px;font-size:6.4px;color:#222;">OK</div>
<div class="t" style="left:336.75px;width:32px;text-align:center;top:427.43px;height:8.96px;line-height:8.96px;font-size:6.4px;color:#222;">0.000</div>
<div class="t" style="left:368.25px;width:32px;text-align:center;top:427.43px;height:8.96px;line-height:8.96px;font-size:6.4px;color:#222;">0.000</div>
<div class="t" style="left:399.75px;width:32px;text-align:center;top:427.43px;height:8.96px;line-height:8.96px;font-size:6.4px;color:#222;">0</div>
<div class="t" style="left:431.25px;width:32px;text-align:center;top:427.43px;height:8.96px;line-height:8.96px;font-size:6.4px;color:#222;">0</div>
<div class="t" style="left:462.75px;width:32px;text-align:center;top:427.43px;height:8.96px;line-height:8.96px;font-size:6.4px;color:#222;">36</div>
<div class="t" style="left:494.25px;width:32px;text-align:center;top:427.43px;height:8.96px;line-height:8.96px;font-size:6.4px;color:#222;">0</div>
<div class="t" style="left:525.75px;width:32px;text-align:center;top:427.43px;height:8.96px;line-height:8.96px;font-size:6.4px;color:#222;">36</div>
<div class="t" style="left:557.25px;width:32px;text-align:center;top:427.43px;height:8.96px;line-height:8.96px;font-size:6.4px;color:#222;">100.00%</div>
<div class="t" style="left:588.75px;width:32px;text-align:center;top:427.43px;height:8.96px;line-height:8.96px;font-size:6.4px;color:#222;">0.00%</div>
<div class="t" style="left:620.25px;width:32px;text-align:center;top:427.43px;height:8.96px;line-height:8.96px;font-size:6.4px;color:#222;">0.001</div>
<svg style="left:205px;top:437.14px" width="32" height="10.5" viewBox="0 0 32 10.5"><path d="M6.4 0v10.5M6.4 5.2h7.6" stroke="#c4c4c4" stroke-width="0.4"/></svg>
<svg style="left:219px;top:438.97px" width="8" height="7" viewBox="0 0 8 7"><path d="M1.6 1.6L6 5.6" stroke="#666" stroke-width="0.5"/><circle cx="1.6" cy="1.6" r="0.9" fill="#222"/><circle cx="6" cy="5.6" r="0.9" fill="#222"/></svg>
<div class="t" style="left:229.5px;top:438.03px;height:8.68px;line-height:8.68px;font-size:6.2px;color:#222;font-weight:700;letter-spacing:-0.2px">点到点1</div>
<div class="t" style="left:243.8px;width:30px;text-align:right;top:439.40px;height:7.14px;line-height:7.14px;font-size:5.1px;color:#86c426;font-family:Liberation Mono,monospace;font-weight:700">0.0</div>
<div class="t" style="left:273.75px;width:32px;text-align:center;top:437.89px;height:8.96px;line-height:8.96px;font-size:6.4px;color:#222;">1</div>
<div class="t" style="left:305.25px;width:32px;text-align:center;top:437.89px;height:8.96px;line-height:8.96px;font-size:6.4px;color:#222;">OK</div>
<div class="t" style="left:336.75px;width:32px;text-align:center;top:437.89px;height:8.96px;line-height:8.96px;font-size:6.4px;color:#222;">0.000</div>
<div class="t" style="left:368.25px;width:32px;text-align:center;top:437.89px;height:8.96px;line-height:8.96px;font-size:6.4px;color:#222;">0.000</div>
<div class="t" style="left:399.75px;width:32px;text-align:center;top:437.89px;height:8.96px;line-height:8.96px;font-size:6.4px;color:#222;">0</div>
<div class="t" style="left:431.25px;width:32px;text-align:center;top:437.89px;height:8.96px;line-height:8.96px;font-size:6.4px;color:#222;">0</div>
<div class="t" style="left:462.75px;width:32px;text-align:center;top:437.89px;height:8.96px;line-height:8.96px;font-size:6.4px;color:#222;">36</div>
<div class="t" style="left:494.25px;width:32px;text-align:center;top:437.89px;height:8.96px;line-height:8.96px;font-size:6.4px;color:#222;">0</div>
<div class="t" style="left:525.75px;width:32px;text-align:center;top:437.89px;height:8.96px;line-height:8.96px;font-size:6.4px;color:#222;">36</div>
<div class="t" style="left:557.25px;width:32px;text-align:center;top:437.89px;height:8.96px;line-height:8.96px;font-size:6.4px;color:#222;">100.00%</div>
<div class="t" style="left:588.75px;width:32px;text-align:center;top:437.89px;height:8.96px;line-height:8.96px;font-size:6.4px;color:#222;">0.00%</div>
<div class="t" style="left:620.25px;width:32px;text-align:center;top:437.89px;height:8.96px;line-height:8.96px;font-size:6.4px;color:#222;">0.003</div>
<svg style="left:205px;top:447.60px" width="32" height="10.5" viewBox="0 0 32 10.5"><path d="M6.4 0v10.5M6.4 5.2h7.6" stroke="#c4c4c4" stroke-width="0.4"/></svg>
<svg style="left:219px;top:449.43px" width="8" height="7" viewBox="0 0 8 7"><path d="M0.6 6.2L5.4 0.8M0.6 6.2H7.6" stroke="#c04848" stroke-width="0.7" fill="none"/><path d="M3.4 6.2a2.8 2.8 0 0 0-1-2.2" stroke="#4a68c0" stroke-width="0.6" fill="none"/></svg>
<div class="t" style="left:229.5px;top:448.49px;height:8.68px;line-height:8.68px;font-size:6.2px;color:#222;font-weight:700;letter-spacing:-0.2px">线段交点夹角3</div>
<div class="t" style="left:273.75px;width:32px;text-align:center;top:448.35px;height:8.96px;line-height:8.96px;font-size:6.4px;color:#222;">1</div>
<div class="t" style="left:305.25px;width:32px;text-align:center;top:448.35px;height:8.96px;line-height:8.96px;font-size:6.4px;color:#222;">OK</div>
<div class="t" style="left:336.75px;width:32px;text-align:center;top:448.35px;height:8.96px;line-height:8.96px;font-size:6.4px;color:#222;">0.000</div>
<div class="t" style="left:368.25px;width:32px;text-align:center;top:448.35px;height:8.96px;line-height:8.96px;font-size:6.4px;color:#222;">0.000</div>
<div class="t" style="left:399.75px;width:32px;text-align:center;top:448.35px;height:8.96px;line-height:8.96px;font-size:6.4px;color:#222;">0</div>
<div class="t" style="left:431.25px;width:32px;text-align:center;top:448.35px;height:8.96px;line-height:8.96px;font-size:6.4px;color:#222;">0</div>
<div class="t" style="left:462.75px;width:32px;text-align:center;top:448.35px;height:8.96px;line-height:8.96px;font-size:6.4px;color:#222;">36</div>
<div class="t" style="left:494.25px;width:32px;text-align:center;top:448.35px;height:8.96px;line-height:8.96px;font-size:6.4px;color:#222;">0</div>
<div class="t" style="left:525.75px;width:32px;text-align:center;top:448.35px;height:8.96px;line-height:8.96px;font-size:6.4px;color:#222;">36</div>
<div class="t" style="left:557.25px;width:32px;text-align:center;top:448.35px;height:8.96px;line-height:8.96px;font-size:6.4px;color:#222;">100.00%</div>
<div class="t" style="left:588.75px;width:32px;text-align:center;top:448.35px;height:8.96px;line-height:8.96px;font-size:6.4px;color:#222;">0.00%</div>
<div class="t" style="left:620.25px;width:32px;text-align:center;top:448.35px;height:8.96px;line-height:8.96px;font-size:6.4px;color:#222;">0.002</div>
<svg style="left:205px;top:458.06px" width="32" height="10.5" viewBox="0 0 32 10.5"><path d="M6.4 0v10.5M6.4 5.2h7.6" stroke="#c4c4c4" stroke-width="0.4"/></svg>
<svg style="left:219px;top:459.89px" width="8" height="7" viewBox="0 0 8 7"><path d="M0.6 6.2L5.4 0.8M0.6 6.2H7.6" stroke="#c04848" stroke-width="0.7" fill="none"/><path d="M3.4 6.2a2.8 2.8 0 0 0-1-2.2" stroke="#4a68c0" stroke-width="0.6" fill="none"/></svg>
<div class="t" style="left:229.5px;top:458.95px;height:8.68px;line-height:8.68px;font-size:6.2px;color:#222;font-weight:700;letter-spacing:-0.2px">线段交点夹角4</div>
<div class="t" style="left:273.75px;width:32px;text-align:center;top:458.81px;height:8.96px;line-height:8.96px;font-size:6.4px;color:#222;">1</div>
<div class="t" style="left:305.25px;width:32px;text-align:center;top:458.81px;height:8.96px;line-height:8.96px;font-size:6.4px;color:#222;">OK</div>
<div class="t" style="left:336.75px;width:32px;text-align:center;top:458.81px;height:8.96px;line-height:8.96px;font-size:6.4px;color:#222;">0.000</div>
<div class="t" style="left:368.25px;width:32px;text-align:center;top:458.81px;height:8.96px;line-height:8.96px;font-size:6.4px;color:#222;">0.000</div>
<div class="t" style="left:399.75px;width:32px;text-align:center;top:458.81px;height:8.96px;line-height:8.96px;font-size:6.4px;color:#222;">0</div>
<div class="t" style="left:431.25px;width:32px;text-align:center;top:458.81px;height:8.96px;line-height:8.96px;font-size:6.4px;color:#222;">0</div>
<div class="t" style="left:462.75px;width:32px;text-align:center;top:458.81px;height:8.96px;line-height:8.96px;font-size:6.4px;color:#222;">36</div>
<div class="t" style="left:494.25px;width:32px;text-align:center;top:458.81px;height:8.96px;line-height:8.96px;font-size:6.4px;color:#222;">0</div>
<div class="t" style="left:525.75px;width:32px;text-align:center;top:458.81px;height:8.96px;line-height:8.96px;font-size:6.4px;color:#222;">36</div>
<div class="t" style="left:557.25px;width:32px;text-align:center;top:458.81px;height:8.96px;line-height:8.96px;font-size:6.4px;color:#222;">100.00%</div>
<div class="t" style="left:588.75px;width:32px;text-align:center;top:458.81px;height:8.96px;line-height:8.96px;font-size:6.4px;color:#222;">0.00%</div>
<div class="t" style="left:620.25px;width:32px;text-align:center;top:458.81px;height:8.96px;line-height:8.96px;font-size:6.4px;color:#222;">0.002</div>
<svg style="left:205px;top:468.52px" width="32" height="10.5" viewBox="0 0 32 10.5"><path d="M6.4 0v10.5M6.4 5.2h7.6" stroke="#c4c4c4" stroke-width="0.4"/></svg>
<svg style="left:219px;top:470.35px" width="8" height="7" viewBox="0 0 8 7"><path d="M1.6 1.6L6 5.6" stroke="#666" stroke-width="0.5"/><circle cx="1.6" cy="1.6" r="0.9" fill="#222"/><circle cx="6" cy="5.6" r="0.9" fill="#222"/></svg>
<div class="t" style="left:229.5px;top:469.41px;height:8.68px;line-height:8.68px;font-size:6.2px;color:#222;font-weight:700;letter-spacing:-0.2px">点到点3</div>
<div class="t" style="left:243.8px;width:30px;text-align:right;top:470.78px;height:7.14px;line-height:7.14px;font-size:5.1px;color:#86c426;font-family:Liberation Mono,monospace;font-weight:700">0.0</div>
<div class="t" style="left:273.75px;width:32px;text-align:center;top:469.27px;height:8.96px;line-height:8.96px;font-size:6.4px;color:#222;">1</div>
<div class="t" style="left:305.25px;width:32px;text-align:center;top:469.27px;height:8.96px;line-height:8.96px;font-size:6.4px;color:#222;">OK</div>
<div class="t" style="left:336.75px;width:32px;text-align:center;top:469.27px;height:8.96px;line-height:8.96px;font-size:6.4px;color:#222;">0.000</div>
<div class="t" style="left:368.25px;width:32px;text-align:center;top:469.27px;height:8.96px;line-height:8.96px;font-size:6.4px;color:#222;">0.000</div>
<div class="t" style="left:399.75px;width:32px;text-align:center;top:469.27px;height:8.96px;line-height:8.96px;font-size:6.4px;color:#222;">0</div>
<div class="t" style="left:431.25px;width:32px;text-align:center;top:469.27px;height:8.96px;line-height:8.96px;font-size:6.4px;color:#222;">0</div>
<div class="t" style="left:462.75px;width:32px;text-align:center;top:469.27px;height:8.96px;line-height:8.96px;font-size:6.4px;color:#222;">36</div>
<div class="t" style="left:494.25px;width:32px;text-align:center;top:469.27px;height:8.96px;line-height:8.96px;font-size:6.4px;color:#222;">0</div>
<div class="t" style="left:525.75px;width:32px;text-align:center;top:469.27px;height:8.96px;line-height:8.96px;font-size:6.4px;color:#222;">36</div>
<div class="t" style="left:557.25px;width:32px;text-align:center;top:469.27px;height:8.96px;line-height:8.96px;font-size:6.4px;color:#222;">100.00%</div>
<div class="t" style="left:588.75px;width:32px;text-align:center;top:469.27px;height:8.96px;line-height:8.96px;font-size:6.4px;color:#222;">0.00%</div>
<div class="t" style="left:620.25px;width:32px;text-align:center;top:469.27px;height:8.96px;line-height:8.96px;font-size:6.4px;color:#222;">0.002</div>
<svg style="left:205px;top:478.98px" width="32" height="10.5" viewBox="0 0 32 10.5"><path d="M6.4 0v10.5M6.4 5.2h7.6" stroke="#c4c4c4" stroke-width="0.4"/></svg>
<svg style="left:219px;top:480.81px" width="8" height="7" viewBox="0 0 8 7"><path d="M1.6 1.6L6 5.6" stroke="#666" stroke-width="0.5"/><circle cx="1.6" cy="1.6" r="0.9" fill="#222"/><circle cx="6" cy="5.6" r="0.9" fill="#222"/></svg>
<div class="t" style="left:229.5px;top:479.87px;height:8.68px;line-height:8.68px;font-size:6.2px;color:#222;font-weight:700;letter-spacing:-0.2px">点到点4</div>
<div class="t" style="left:243.8px;width:30px;text-align:right;top:481.24px;height:7.14px;line-height:7.14px;font-size:5.1px;color:#86c426;font-family:Liberation Mono,monospace;font-weight:700">0.0</div>
<div class="t" style="left:273.75px;width:32px;text-align:center;top:479.73px;height:8.96px;line-height:8.96px;font-size:6.4px;color:#222;">1</div>
<div class="t" style="left:305.25px;width:32px;text-align:center;top:479.73px;height:8.96px;line-height:8.96px;font-size:6.4px;color:#222;">OK</div>
<div class="t" style="left:336.75px;width:32px;text-align:center;top:479.73px;height:8.96px;line-height:8.96px;font-size:6.4px;color:#222;">0.000</div>
<div class="t" style="left:368.25px;width:32px;text-align:center;top:479.73px;height:8.96px;line-height:8.96px;font-size:6.4px;color:#222;">0.000</div>
<div class="t" style="left:399.75px;width:32px;text-align:center;top:479.73px;height:8.96px;line-height:8.96px;font-size:6.4px;color:#222;">0</div>
<div class="t" style="left:431.25px;width:32px;text-align:center;top:479.73px;height:8.96px;line-height:8.96px;font-size:6.4px;color:#222;">0</div>
<div class="t" style="left:462.75px;width:32px;text-align:center;top:479.73px;height:8.96px;line-height:8.96px;font-size:6.4px;color:#222;">36</div>
<div class="t" style="left:494.25px;width:32px;text-align:center;top:479.73px;height:8.96px;line-height:8.96px;font-size:6.4px;color:#222;">0</div>
<div class="t" style="left:525.75px;width:32px;text-align:center;top:479.73px;height:8.96px;line-height:8.96px;font-size:6.4px;color:#222;">36</div>
<div class="t" style="left:557.25px;width:32px;text-align:center;top:479.73px;height:8.96px;line-height:8.96px;font-size:6.4px;color:#222;">100.00%</div>
<div class="t" style="left:588.75px;width:32px;text-align:center;top:479.73px;height:8.96px;line-height:8.96px;font-size:6.4px;color:#222;">0.00%</div>
<div class="t" style="left:620.25px;width:32px;text-align:center;top:479.73px;height:8.96px;line-height:8.96px;font-size:6.4px;color:#222;">0.002</div>
<svg style="left:205px;top:489.44px" width="32" height="10.5" viewBox="0 0 32 10.5"><path d="M6.4 0v10.5M6.4 5.2h7.6" stroke="#c4c4c4" stroke-width="0.4"/></svg>
<svg style="left:219px;top:491.27px" width="8" height="7" viewBox="0 0 8 7"><path d="M0.6 6.2L5.4 0.8M0.6 6.2H7.6" stroke="#c04848" stroke-width="0.7" fill="none"/><path d="M3.4 6.2a2.8 2.8 0 0 0-1-2.2" stroke="#4a68c0" stroke-width="0.6" fill="none"/></svg>
<div class="t" style="left:229.5px;top:490.33px;height:8.68px;line-height:8.68px;font-size:6.2px;color:#222;font-weight:700;letter-spacing:-0.2px">线段交点夹角5</div>
<div class="t" style="left:273.75px;width:32px;text-align:center;top:490.19px;height:8.96px;line-height:8.96px;font-size:6.4px;color:#222;">1</div>
<div class="t" style="left:305.25px;width:32px;text-align:center;top:490.19px;height:8.96px;line-height:8.96px;font-size:6.4px;color:#222;">OK</div>
<div class="t" style="left:336.75px;width:32px;text-align:center;top:490.19px;height:8.96px;line-height:8.96px;font-size:6.4px;color:#222;">0.000</div>
<div class="t" style="left:368.25px;width:32px;text-align:center;top:490.19px;height:8.96px;line-height:8.96px;font-size:6.4px;color:#222;">0.000</div>
<div class="t" style="left:399.75px;width:32px;text-align:center;top:490.19px;height:8.96px;line-height:8.96px;font-size:6.4px;color:#222;">0</div>
<div class="t" style="left:431.25px;width:32px;text-align:center;top:490.19px;height:8.96px;line-height:8.96px;font-size:6.4px;color:#222;">0</div>
<div class="t" style="left:462.75px;width:32px;text-align:center;top:490.19px;height:8.96px;line-height:8.96px;font-size:6.4px;color:#222;">36</div>
<div class="t" style="left:494.25px;width:32px;text-align:center;top:490.19px;height:8.96px;line-height:8.96px;font-size:6.4px;color:#222;">0</div>
<div class="t" style="left:525.75px;width:32px;text-align:center;top:490.19px;height:8.96px;line-height:8.96px;font-size:6.4px;color:#222;">36</div>
<div class="t" style="left:557.25px;width:32px;text-align:center;top:490.19px;height:8.96px;line-height:8.96px;font-size:6.4px;color:#222;">100.00%</div>
<div class="t" style="left:588.75px;width:32px;text-align:center;top:490.19px;height:8.96px;line-height:8.96px;font-size:6.4px;color:#222;">0.00%</div>
<div class="t" style="left:620.25px;width:32px;text-align:center;top:490.19px;height:8.96px;line-height:8.96px;font-size:6.4px;color:#222;">0.002</div>
<svg style="left:205px;top:499.90px" width="32" height="10.5" viewBox="0 0 32 10.5"><path d="M6.4 0v10.5M6.4 5.2h7.6" stroke="#c4c4c4" stroke-width="0.4"/></svg>
<svg style="left:219px;top:501.73px" width="8" height="7" viewBox="0 0 8 7"><path d="M1.6 1.6L6 5.6" stroke="#666" stroke-width="0.5"/><circle cx="1.6" cy="1.6" r="0.9" fill="#222"/><circle cx="6" cy="5.6" r="0.9" fill="#222"/></svg>
<div class="t" style="left:229.5px;top:500.79px;height:8.68px;line-height:8.68px;font-size:6.2px;color:#222;font-weight:700;letter-spacing:-0.2px">点到点5</div>
<div class="t" style="left:243.8px;width:30px;text-align:right;top:502.16px;height:7.14px;line-height:7.14px;font-size:5.1px;color:#86c426;font-family:Liberation Mono,monospace;font-weight:700">0.0</div>
<div class="t" style="left:273.75px;width:32px;text-align:center;top:500.65px;height:8.96px;line-height:8.96px;font-size:6.4px;color:#222;">1</div>
<div class="t" style="left:305.25px;width:32px;text-align:center;top:500.65px;height:8.96px;line-height:8.96px;font-size:6.4px;color:#222;">OK</div>
<div class="t" style="left:336.75px;width:32px;text-align:center;top:500.65px;height:8.96px;line-height:8.96px;font-size:6.4px;color:#222;">0.000</div>
<div class="t" style="left:368.25px;width:32px;text-align:center;top:500.65px;height:8.96px;line-height:8.96px;font-size:6.4px;color:#222;">0.000</div>
<div class="t" style="left:399.75px;width:32px;text-align:center;top:500.65px;height:8.96px;line-height:8.96px;font-size:6.4px;color:#222;">0</div>
<div class="t" style="left:431.25px;width:32px;text-align:center;top:500.65px;height:8.96px;line-height:8.96px;font-size:6.4px;color:#222;">0</div>
<div class="t" style="left:462.75px;width:32px;text-align:center;top:500.65px;height:8.96px;line-height:8.96px;font-size:6.4px;color:#222;">36</div>
<div class="t" style="left:494.25px;width:32px;text-align:center;top:500.65px;height:8.96px;line-height:8.96px;font-size:6.4px;color:#222;">0</div>
<div class="t" style="left:525.75px;width:32px;text-align:center;top:500.65px;height:8.96px;line-height:8.96px;font-size:6.4px;color:#222;">36</div>
<div class="t" style="left:557.25px;width:32px;text-align:center;top:500.65px;height:8.96px;line-height:8.96px;font-size:6.4px;color:#222;">100.00%</div>
<div class="t" style="left:588.75px;width:32px;text-align:center;top:500.65px;height:8.96px;line-height:8.96px;font-size:6.4px;color:#222;">0.00%</div>
<div class="t" style="left:620.25px;width:32px;text-align:center;top:500.65px;height:8.96px;line-height:8.96px;font-size:6.4px;color:#222;">0.002</div>
<svg style="left:205px;top:510.36px" width="32" height="10.5" viewBox="0 0 32 10.5"><path d="M6.4 0v10.5M6.4 5.2h7.6" stroke="#c4c4c4" stroke-width="0.4"/></svg>
<svg style="left:219px;top:512.19px" width="8" height="7" viewBox="0 0 8 7"><path d="M0.6 6.2L5.4 0.8M0.6 6.2H7.6" stroke="#c04848" stroke-width="0.7" fill="none"/><path d="M3.4 6.2a2.8 2.8 0 0 0-1-2.2" stroke="#4a68c0" stroke-width="0.6" fill="none"/></svg>
<div class="t" style="left:229.5px;top:511.25px;height:8.68px;line-height:8.68px;font-size:6.2px;color:#222;font-weight:700;letter-spacing:-0.2px">线段交点夹角6</div>
<div class="t" style="left:273.75px;width:32px;text-align:center;top:511.11px;height:8.96px;line-height:8.96px;font-size:6.4px;color:#222;">1</div>
<div class="t" style="left:305.25px;width:32px;text-align:center;top:511.11px;height:8.96px;line-height:8.96px;font-size:6.4px;color:#222;">OK</div>
<div class="t" style="left:336.75px;width:32px;text-align:center;top:511.11px;height:8.96px;line-height:8.96px;font-size:6.4px;color:#222;">0.000</div>
<div class="t" style="left:368.25px;width:32px;text-align:center;top:511.11px;height:8.96px;line-height:8.96px;font-size:6.4px;color:#222;">0.000</div>
<div class="t" style="left:399.75px;width:32px;text-align:center;top:511.11px;height:8.96px;line-height:8.96px;font-size:6.4px;color:#222;">0</div>
<div class="t" style="left:431.25px;width:32px;text-align:center;top:511.11px;height:8.96px;line-height:8.96px;font-size:6.4px;color:#222;">0</div>
<div class="t" style="left:462.75px;width:32px;text-align:center;top:511.11px;height:8.96px;line-height:8.96px;font-size:6.4px;color:#222;">36</div>
<div class="t" style="left:494.25px;width:32px;text-align:center;top:511.11px;height:8.96px;line-height:8.96px;font-size:6.4px;color:#222;">0</div>
<div class="t" style="left:525.75px;width:32px;text-align:center;top:511.11px;height:8.96px;line-height:8.96px;font-size:6.4px;color:#222;">36</div>
<div class="t" style="left:557.25px;width:32px;text-align:center;top:511.11px;height:8.96px;line-height:8.96px;font-size:6.4px;color:#222;">100.00%</div>
<div class="t" style="left:588.75px;width:32px;text-align:center;top:511.11px;height:8.96px;line-height:8.96px;font-size:6.4px;color:#222;">0.00%</div>
<div class="t" style="left:620.25px;width:32px;text-align:center;top:511.11px;height:8.96px;line-height:8.96px;font-size:6.4px;color:#222;">0.002</div>
<svg style="left:205px;top:520.82px" width="32" height="10.5" viewBox="0 0 32 10.5"><path d="M6.4 0v5.2M6.4 5.2h7.6" stroke="#c4c4c4" stroke-width="0.4"/></svg>
<svg style="left:219px;top:522.65px" width="8" height="7" viewBox="0 0 8 7"><path d="M0.6 0.8h6.4M0.6 6.2h6.4M3.8 0.8v5.4" stroke="#3a7a5a" stroke-width="0.7" fill="none"/></svg>
<div class="t" style="left:229.5px;top:521.71px;height:8.68px;line-height:8.68px;font-size:6.2px;color:#222;font-weight:700;letter-spacing:-0.2px">外径</div>
<div class="t" style="left:243.8px;width:30px;text-align:right;top:523.08px;height:7.14px;line-height:7.14px;font-size:5.1px;color:#86c426;font-family:Liberation Mono,monospace;font-weight:700">0.004 r</div>
<div class="t" style="left:273.75px;width:32px;text-align:center;top:521.57px;height:8.96px;line-height:8.96px;font-size:6.4px;color:#222;">1</div>
<div class="t" style="left:305.25px;width:32px;text-align:center;top:521.57px;height:8.96px;line-height:8.96px;font-size:6.4px;color:#222;">OK</div>
<div class="t" style="left:336.75px;width:32px;text-align:center;top:521.57px;height:8.96px;line-height:8.96px;font-size:6.4px;color:#222;">3.200</div>
<div class="t" style="left:368.25px;width:32px;text-align:center;top:521.57px;height:8.96px;line-height:8.96px;font-size:6.4px;color:#222;">3.300</div>
<div class="t" style="left:399.75px;width:32px;text-align:center;top:521.57px;height:8.96px;line-height:8.96px;font-size:6.4px;color:#222;">0</div>
<div class="t" style="left:431.25px;width:32px;text-align:center;top:521.57px;height:8.96px;line-height:8.96px;font-size:6.4px;color:#222;">0</div>
<div class="t" style="left:462.75px;width:32px;text-align:center;top:521.57px;height:8.96px;line-height:8.96px;font-size:6.4px;color:#222;">33</div>
<div class="t" style="left:494.25px;width:32px;text-align:center;top:521.57px;height:8.96px;line-height:8.96px;font-size:6.4px;color:#222;">3</div>
<div class="t" style="left:525.75px;width:32px;text-align:center;top:521.57px;height:8.96px;line-height:8.96px;font-size:6.4px;color:#222;">36</div>
<div class="t" style="left:557.25px;width:32px;text-align:center;top:521.57px;height:8.96px;line-height:8.96px;font-size:6.4px;color:#222;">91.67%</div>
<div class="t" style="left:588.75px;width:32px;text-align:center;top:521.57px;height:8.96px;line-height:8.96px;font-size:6.4px;color:#222;">8.33%</div>
<div class="t" style="left:620.25px;width:32px;text-align:center;top:521.57px;height:8.96px;line-height:8.96px;font-size:6.4px;color:#222;">0.004</div>
<div style="left:996.3px;top:393.4px;width:3.7px;height:135px;background:#c8c8c8"></div>
<div style="left:194.5px;top:528.4px;width:805.5px;height:6px;background:#ececec;border-top:1.4px solid #a8a8a8"></div>
<div class="t" style="left:196.4px;top:530.86px;height:8.68px;line-height:8.68px;font-size:6.2px;color:#222;font-weight:500">型号:</div>
<div class="t" style="left:216px;top:530.58px;height:9.24px;line-height:9.24px;font-size:6.6px;color:#2a5ad0;font-weight:500">虎爪</div>
<div class="t" style="left:302.5px;top:530.86px;height:8.68px;line-height:8.68px;font-size:6.2px;color:#222;font-weight:500">版本:</div>
<div class="t" style="left:318.5px;top:530.58px;height:9.24px;line-height:9.24px;font-size:6.6px;color:#2a5ad0;font-weight:500">新版本</div>
<svg style="left:926px;top:524px" width="74" height="10" viewBox="926 524 74 10"><rect x="926" y="527.6" width="74" height="7" fill="#fbfcfe"/><circle cx="927.6" cy="528.4" r="1.2" fill="#d84a3a"/><circle cx="930" cy="532.6" r="2.6" fill="#8ac828"/><circle cx="935.6" cy="532.2" r="5.6" fill="#3aa8ea"/><circle cx="933.2" cy="532" r="1.6" fill="#fff"/><circle cx="937.4" cy="532" r="1.6" fill="#fff"/><circle cx="933.6" cy="532.6" r="0.8" fill="#123"/><circle cx="937.2" cy="532.6" r="0.8" fill="#123"/><path d="M961 534l1.6-3.6 1.6 3.6" stroke="#2a5ab8" stroke-width="1" fill="none"/><circle cx="969" cy="531" r="0.9" fill="#6a8ac0"/><circle cx="972" cy="533.4" r="0.8" fill="#2a5ab8"/><path d="M980 534v-2.6l2-1.4 2 1.4" stroke="#2a5ab8" stroke-width="0.9" fill="none"/><circle cx="986.4" cy="530.2" r="1.2" fill="#d84a3a"/><path d="M994 534a3 3 0 0 1 5.4 0" stroke="#3a6ac8" stroke-width="0.9" fill="none"/></svg>
<div class="t" style="left:943px;top:528.58px;height:12.04px;line-height:12.04px;font-size:8.6px;color:#1a4aa8;font-weight:700">中</div>
</div></body></html>
